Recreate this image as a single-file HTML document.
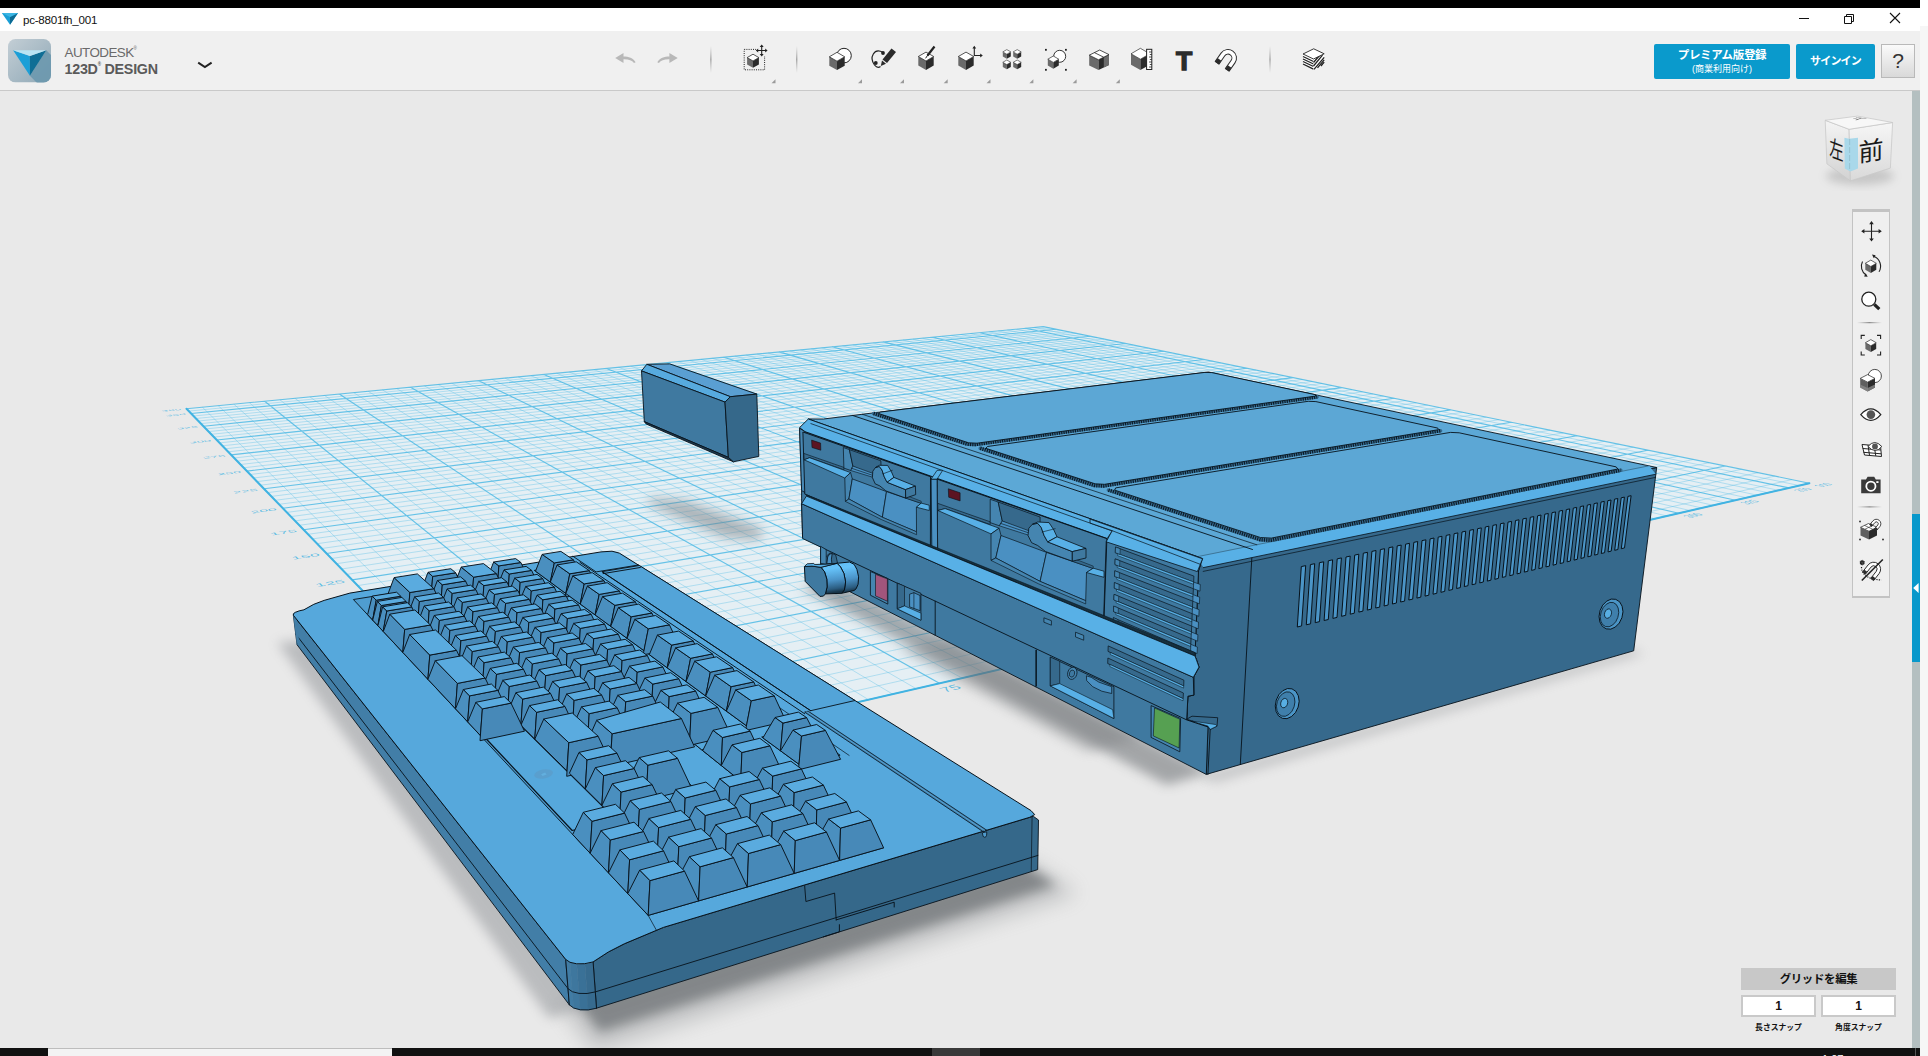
<!DOCTYPE html>
<html lang="ja"><head><meta charset="utf-8"><title>pc-8801fh_001</title>
<style>
html,body{margin:0;padding:0;width:1928px;height:1056px;overflow:hidden;background:#e9e9e9;font-family:"Liberation Sans","Noto Sans CJK JP",sans-serif;}
#app{position:absolute;left:0;top:0;width:1928px;height:1056px;overflow:hidden;background:#e9e9e9;}
.abs{position:absolute}
#blacktop{left:0;top:0;width:1920px;height:8px;background:#000}
#rightwhite{left:1920px;top:0;width:8px;height:1056px;background:linear-gradient(#fff 0,#fff 26px,#f6f6f6 26px)}
#titlebar{left:0;top:8px;width:1920px;height:23px;background:#fff}
#titlebar .t{position:absolute;left:23px;top:5px;font-size:11.6px;color:#111;letter-spacing:-0.25px}
#toolbar{left:0;top:31px;width:1920px;height:59px;background:#f0f0f0;border-bottom:1px solid #c9c9c9}
svg.scene{position:absolute;left:0;top:0}
#strip{left:1912px;top:91px;width:8px;height:957px;background:#b4bfc0}
#stripblue{left:1912px;top:514px;width:8px;height:148px;background:#0898cb}
#taskbar{left:0;top:1048px;width:1920px;height:8px;background:#111}
#search{left:48px;top:1048px;width:344px;height:8px;background:#f3f3f3;border-top:1px solid #bdbdbd;box-sizing:border-box}
#tbact{left:932px;top:1048px;width:48px;height:8px;background:#393939}
.btn{background:#0a9acc;color:#fff;text-align:center;border-radius:2px;font-weight:bold}
#prem{left:1654px;top:44px;width:136px;height:35px}
#prem .a{position:absolute;left:0;width:100%;top:3.5px;font-size:11.5px;line-height:14px;letter-spacing:-0.35px}
#prem .b{position:absolute;left:0;width:100%;top:19px;font-size:9px;line-height:12px;font-weight:normal}
#signin{left:1796px;top:44px;width:79px;height:35px;font-size:11px;line-height:35px;letter-spacing:-0.8px}
#help{left:1881px;top:44px;width:32px;height:32px;border:1px solid #b9b9b9;background:linear-gradient(#fafafa,#d9d9d9);font-size:21px;line-height:32px;text-align:center;color:#333}
#navbar{left:1852px;top:209px;width:37.5px;height:389px;background:#efefef;border:1px solid #c3c3c3;border-top:3px solid #c3c3c3;box-sizing:border-box;border-bottom-width:2px}
#gridhdr{left:1741px;top:968px;width:155px;height:22px;background:#c8c8c8;font-size:11.4px;letter-spacing:-0.3px;font-weight:bold;line-height:23px;text-align:center;color:#111}
.ginp{top:995px;width:75px;height:22px;box-sizing:border-box;border:2px solid #c9c9c9;background:#fff;font-size:12px;line-height:18px;text-align:center;color:#111;font-weight:bold}
.glab{top:1021.5px;width:75px;font-size:7.8px;font-weight:bold;text-align:center;color:#111;line-height:12px;white-space:nowrap}
#brand1{left:64.5px;top:45px;font-size:13.4px;color:#6a6a6a;letter-spacing:-0.55px}
#brand2{left:64.5px;top:60.5px;font-size:14.3px;color:#5a5a5a;font-weight:bold;letter-spacing:-0.25px}
</style></head><body><div id="app">
<svg class="scene" width="1928" height="1056" viewBox="0 0 1928 1056" font-family="Liberation Sans, sans-serif">
<defs><filter id="bl6" x="-30%" y="-30%" width="160%" height="160%"><feGaussianBlur stdDeviation="6"/></filter><filter id="bl10" x="-30%" y="-30%" width="160%" height="160%"><feGaussianBlur stdDeviation="10"/></filter><filter id="bl16" x="-30%" y="-30%" width="160%" height="160%"><feGaussianBlur stdDeviation="16"/></filter></defs>
<polygon points="541.0,775.0 186.5,408.7 1043.3,326.6 1809.4,483.2" fill="#e5eff4"/>
<path d="M571.3 768.0L202.4 407.2M530.6 764.3L1791.9 479.6M601.1 761.2L218.2 405.7M520.6 753.9L1774.8 476.1M630.2 754.5L233.9 404.2M510.8 743.8L1757.9 472.7M658.8 747.9L249.3 402.7M501.3 734.0L1741.4 469.3M714.3 735.1L279.9 399.8M483.2 715.3L1709.1 462.7M741.2 728.9L294.9 398.3M474.5 706.3L1693.4 459.5M767.6 722.9L309.9 396.9M466.1 697.6L1678.0 456.3M793.5 716.9L324.6 395.5M457.9 689.2L1662.8 453.2M844.0 705.3L353.8 392.7M442.2 672.9L1633.2 447.2M868.5 699.7L368.2 391.3M434.7 665.1L1618.8 444.2M892.6 694.1L382.4 389.9M427.3 657.5L1604.6 441.3M916.2 688.7L396.6 388.6M420.2 650.1L1590.6 438.5M962.2 678.1L424.4 385.9M406.4 635.9L1563.3 432.9M984.6 672.9L438.2 384.6M399.8 629.1L1550.0 430.2M1006.7 667.9L451.8 383.3M393.3 622.4L1536.9 427.5M1028.3 662.9L465.3 382.0M387.0 615.9L1524.0 424.9M1070.5 653.2L492.0 379.4M374.9 603.3L1498.8 419.7M1091.0 648.5L505.1 378.2M369.0 597.3L1486.4 417.2M1111.3 643.8L518.2 376.9M363.3 591.3L1474.3 414.7M1131.2 639.2L531.1 375.7M357.7 585.6L1462.3 412.3M1170.0 630.3L556.6 373.2M346.8 574.4L1439.0 407.5M1188.9 625.9L569.2 372.0M341.6 569.0L1427.5 405.1M1207.5 621.7L581.7 370.8M336.5 563.7L1416.3 402.8M1225.9 617.4L594.1 369.6M331.5 558.5L1405.2 400.6M1261.7 609.2L618.6 367.3M321.8 548.5L1383.4 396.1M1279.2 605.2L630.7 366.1M317.1 543.7L1372.8 394.0M1296.4 601.2L642.7 365.0M312.5 538.9L1362.3 391.8M1313.4 597.3L654.5 363.9M308.0 534.3L1352.0 389.7M1346.5 589.7L678.0 361.6M299.3 525.3L1331.7 385.6M1362.7 586.0L689.6 360.5M295.1 520.9L1321.8 383.5M1378.7 582.3L701.1 359.4M290.9 516.6L1312.0 381.5M1394.4 578.7L712.5 358.3M286.9 512.4L1302.3 379.5M1425.2 571.6L735.1 356.1M279.0 504.3L1283.4 375.7M1440.3 568.1L746.2 355.1M275.1 500.3L1274.1 373.8M1455.1 564.7L757.2 354.0M271.4 496.4L1265.0 371.9M1469.8 561.3L768.2 353.0M267.7 492.6L1255.9 370.1M1498.4 554.7L789.9 350.9M260.5 485.2L1238.2 366.4M1512.5 551.5L800.6 349.9M257.0 481.6L1229.5 364.7M1526.3 548.3L811.2 348.8M253.6 478.0L1220.9 362.9M1540.0 545.2L821.7 347.8M250.2 474.5L1212.5 361.2M1566.7 539.0L842.5 345.8M243.7 467.8L1195.8 357.8M1579.8 536.0L852.8 344.9M240.5 464.5L1187.7 356.1M1592.7 533.0L863.0 343.9M237.3 461.2L1179.6 354.5M1605.5 530.1L873.2 342.9M234.2 458.0L1171.6 352.8M1630.5 524.4L893.2 341.0M228.2 451.8L1156.0 349.6M1642.8 521.5L903.1 340.0M225.3 448.8L1148.3 348.1M1654.9 518.7L913.0 339.1M222.4 445.8L1140.7 346.5M1666.9 516.0L922.7 338.2M219.6 442.9L1133.2 345.0M1690.3 510.6L942.0 336.3M214.0 437.1L1118.5 342.0M1701.8 508.0L951.6 335.4M211.3 434.3L1111.3 340.5M1713.2 505.3L961.1 334.5M208.7 431.6L1104.1 339.0M1724.4 502.8L970.5 333.6M206.0 428.9L1097.1 337.6M1746.4 497.7L989.1 331.8M200.9 423.6L1083.2 334.7M1757.2 495.2L998.3 330.9M198.4 421.0L1076.3 333.4M1767.9 492.7L1007.4 330.0M196.0 418.5L1069.6 332.0M1778.5 490.3L1016.5 329.2M193.6 416.0L1062.9 330.6M1799.2 485.5L1034.4 327.5M188.8 411.1L1049.8 327.9" stroke="#4fbbe6" stroke-opacity="0.45" stroke-width="0.8" fill="none"/>
<path d="M541.0 775.0L186.5 408.7M541.0 775.0L1809.4 483.2M686.8 741.5L264.7 401.2M492.1 724.5L1725.1 466.0M819.0 711.0L339.3 394.1M450.0 680.9L1647.9 450.2M939.4 683.3L410.5 387.2M413.2 642.9L1576.8 435.7M1049.6 658.0L478.7 380.7M380.9 609.5L1511.3 422.3M1150.7 634.7L543.9 374.5M352.2 579.9L1450.6 409.9M1243.9 613.3L606.4 368.5M326.6 553.5L1394.2 398.3M1330.1 593.5L666.3 362.7M303.6 529.7L1341.8 387.6M1409.9 575.1L723.8 357.2M282.9 508.3L1292.8 377.6M1484.2 558.0L779.1 351.9M264.1 488.8L1247.0 368.2M1553.4 542.1L832.2 346.8M246.9 471.1L1204.1 359.5M1618.1 527.2L883.2 341.9M231.2 454.9L1163.8 351.2M1678.7 513.3L932.4 337.2M216.8 440.0L1125.8 343.5M1735.5 500.2L979.8 332.7M203.5 426.2L1090.1 336.2M1788.9 487.9L1025.5 328.3M191.2 413.5L1056.3 329.3M1809.4 483.2L1043.3 326.6M186.5 408.7L1043.3 326.6" stroke="#45b6e3" stroke-opacity="0.8" stroke-width="1.15" fill="none"/>
<polyline points="186.5,408.7 541.0,775.0 1809.4,483.2" fill="none" stroke="#41b3e2" stroke-width="2.0" stroke-linejoin="round" stroke-linecap="round"/>
<text transform="matrix(2.151 -0.453 0.665 0.699 485.0 728.7)" font-size="10" text-anchor="end" fill="#4fb8e3" fill-opacity="0.9">25</text>
<text transform="matrix(2.031 -0.393 0.576 0.607 443.1 684.6)" font-size="10" text-anchor="end" fill="#4fb8e3" fill-opacity="0.9">50</text>
<text transform="matrix(1.923 -0.344 0.505 0.531 406.5 646.1)" font-size="10" text-anchor="end" fill="#4fb8e3" fill-opacity="0.9">75</text>
<text transform="matrix(1.825 -0.303 0.445 0.469 374.4 612.4)" font-size="10" text-anchor="end" fill="#4fb8e3" fill-opacity="0.9">100</text>
<text transform="matrix(1.737 -0.270 0.396 0.417 346.0 582.4)" font-size="10" text-anchor="end" fill="#4fb8e3" fill-opacity="0.9">125</text>
<text transform="matrix(1.656 -0.241 0.354 0.373 320.6 555.7)" font-size="10" text-anchor="end" fill="#4fb8e3" fill-opacity="0.9">150</text>
<text transform="matrix(1.583 -0.217 0.319 0.336 297.8 531.8)" font-size="10" text-anchor="end" fill="#4fb8e3" fill-opacity="0.9">175</text>
<text transform="matrix(1.515 -0.197 0.289 0.304 277.3 510.1)" font-size="10" text-anchor="end" fill="#4fb8e3" fill-opacity="0.9">200</text>
<text transform="matrix(1.453 -0.179 0.263 0.276 258.6 490.5)" font-size="10" text-anchor="end" fill="#4fb8e3" fill-opacity="0.9">225</text>
<text transform="matrix(1.396 -0.163 0.240 0.252 241.7 472.6)" font-size="10" text-anchor="end" fill="#4fb8e3" fill-opacity="0.9">250</text>
<text transform="matrix(1.343 -0.150 0.220 0.231 226.1 456.3)" font-size="10" text-anchor="end" fill="#4fb8e3" fill-opacity="0.9">275</text>
<text transform="matrix(1.294 -0.138 0.202 0.213 211.8 441.3)" font-size="10" text-anchor="end" fill="#4fb8e3" fill-opacity="0.9">300</text>
<text transform="matrix(1.248 -0.127 0.187 0.197 198.7 427.4)" font-size="10" text-anchor="end" fill="#4fb8e3" fill-opacity="0.9">325</text>
<text transform="matrix(1.206 -0.118 0.173 0.182 186.5 414.6)" font-size="10" text-anchor="end" fill="#4fb8e3" fill-opacity="0.9">350</text>
<text transform="matrix(1.189 -0.114 0.168 0.177 181.9 409.8)" font-size="10" text-anchor="end" fill="#4fb8e3" fill-opacity="0.9">360</text>
<text transform="matrix(1.912 -0.448 0.845 0.691 688.7 752.4)" font-size="10" text-anchor="start" fill="#4fb8e3" fill-opacity="0.9">25</text>
<text transform="matrix(1.736 -0.406 0.938 0.627 822.9 720.9)" font-size="10" text-anchor="start" fill="#4fb8e3" fill-opacity="0.9">50</text>
<text transform="matrix(1.582 -0.370 1.011 0.572 945.0 692.4)" font-size="10" text-anchor="start" fill="#4fb8e3" fill-opacity="0.9">75</text>
<text transform="matrix(1.448 -0.339 1.069 0.524 1056.5 666.3)" font-size="10" text-anchor="start" fill="#4fb8e3" fill-opacity="0.9">100</text>
<text transform="matrix(1.331 -0.312 1.113 0.481 1158.8 642.3)" font-size="10" text-anchor="start" fill="#4fb8e3" fill-opacity="0.9">125</text>
<text transform="matrix(1.227 -0.287 1.147 0.444 1252.9 620.3)" font-size="10" text-anchor="start" fill="#4fb8e3" fill-opacity="0.9">150</text>
<text transform="matrix(1.135 -0.266 1.173 0.410 1339.8 600.0)" font-size="10" text-anchor="start" fill="#4fb8e3" fill-opacity="0.9">175</text>
<text transform="matrix(1.053 -0.246 1.192 0.381 1420.3 581.1)" font-size="10" text-anchor="start" fill="#4fb8e3" fill-opacity="0.9">200</text>
<text transform="matrix(0.979 -0.229 1.206 0.354 1495.1 563.6)" font-size="10" text-anchor="start" fill="#4fb8e3" fill-opacity="0.9">225</text>
<text transform="matrix(0.913 -0.214 1.214 0.330 1564.7 547.3)" font-size="10" text-anchor="start" fill="#4fb8e3" fill-opacity="0.9">250</text>
<text transform="matrix(0.854 -0.200 1.219 0.309 1629.8 532.1)" font-size="10" text-anchor="start" fill="#4fb8e3" fill-opacity="0.9">275</text>
<text transform="matrix(0.800 -0.187 1.221 0.289 1690.6 517.9)" font-size="10" text-anchor="start" fill="#4fb8e3" fill-opacity="0.9">300</text>
<text transform="matrix(0.751 -0.176 1.221 0.272 1747.6 504.5)" font-size="10" text-anchor="start" fill="#4fb8e3" fill-opacity="0.9">325</text>
<text transform="matrix(0.706 -0.165 1.218 0.255 1801.2 492.0)" font-size="10" text-anchor="start" fill="#4fb8e3" fill-opacity="0.9">350</text>
<text transform="matrix(0.689 -0.161 1.216 0.249 1821.8 487.2)" font-size="10" text-anchor="start" fill="#4fb8e3" fill-opacity="0.9">360</text>
<polygon points="649.8,498.2 685.6,501.1 763.2,529.0 759.2,539.9 723.4,536.9 647.8,504.1" fill="#7d8388" filter="url(#bl6)" opacity="0.55"/>
<polygon points="646.8,364.3 669.7,363.9 756.8,394.1 730.4,396.7" fill="#5a9fd2" stroke="#07121b" stroke-width="0.9" stroke-linejoin="round"/>
<polygon points="641.5,370.9 646.8,364.3 730.4,396.7 725.0,402.1" fill="#57aade" stroke="#07121b" stroke-width="0.9" stroke-linejoin="round"/>
<polygon points="641.5,370.9 725.0,402.1 728.4,457.4 644.3,421.6" fill="#3f79a0" stroke="#07121b" stroke-width="0.9" stroke-linejoin="round"/>
<polygon points="644.3,421.6 728.4,457.4 733.4,461.8 646.2,424.0" fill="#1d3a50" stroke="#07121b" stroke-width="0.9" stroke-linejoin="round"/>
<polygon points="725.0,402.1 730.4,396.7 756.8,394.1 758.8,456.4 733.4,461.8 728.4,457.4" fill="#35688a" stroke="#07121b" stroke-width="0.9" stroke-linejoin="round"/>
<polygon points="1166.8,785.1 1210.3,772.3 836.9,580.8 800.8,587.4" fill="#5d6266" filter="url(#bl6)" opacity="0.5"/>
<polygon points="1087.8,752.2 1142.3,737.4 949.2,638.4 899.5,649.0" fill="#6d7175" filter="url(#bl6)" opacity="0.3"/>
<polygon points="1214.8,782.4 1644.2,653.4 1629.1,648.6 1200.8,775.1" fill="#6d7175" filter="url(#bl6)" opacity="0.3"/>
<polygon points="1202.6,558.5 1198.5,570.8 1195.0,656.0 1199.0,667.1 1193.8,676.8 1193.8,695.1 1187.9,696.2 1186.7,719.9 1208.0,727.0 1206.3,774.4 1633.7,650.8 1656.7,467.5" fill="#36698c" stroke="#07121b" stroke-width="0.9" stroke-linejoin="round"/>
<polyline points="1252.3,549.5 1240.3,764.6" fill="none" stroke="#07121b" stroke-width="0.9" stroke-linejoin="round" stroke-linecap="round"/>
<polygon points="808.3,419.0 1202.6,558.5 1656.7,467.5 1208.5,372.0 823.5,419.0" fill="#5ca8d6" stroke="#07121b" stroke-width="0.9" stroke-linejoin="round"/>
<polygon points="1203.4,567.6 1655.9,474.2 1649.1,465.8 1196.7,556.8" fill="#58b0e6"/>
<polyline points="1203.4,567.6 1655.9,474.2" fill="none" stroke="#07121b" stroke-width="0.8" stroke-linejoin="round" stroke-linecap="round"/>
<polyline points="1203.2,571.4 1655.5,477.4" fill="none" stroke="#07121b" stroke-width="0.7" stroke-linejoin="round" stroke-linecap="round"/>
<polyline points="1195.2,557.1 1649.1,465.8" fill="none" stroke="#2a5068" stroke-width="0.6" stroke-linejoin="round" stroke-linecap="round"/>
<polyline points="1252.5,549.5 852.8,415.5" fill="none" stroke="#07121b" stroke-width="0.9" stroke-linejoin="round" stroke-linecap="round"/>
<polyline points="1256.8,544.8 862.4,414.3" fill="none" stroke="#07121b" stroke-width="0.7" stroke-linejoin="round" stroke-linecap="round"/>
<polyline points="873.7,413.5 967.6,444.2 975.5,444.5 1317.1,396.9" fill="none" stroke="#356a8e" stroke-width="3.6" stroke-linejoin="round" stroke-linecap="round"/>
<polyline points="873.7,413.5 967.6,444.2 975.5,444.5 1317.1,396.9" fill="none" stroke="#0b1a26" stroke-width="3.6" stroke-linejoin="round" stroke-dasharray="1.1 1.2" stroke-linecap="butt"/>
<polygon points="977.0,443.2 1315.5,396.1 1315.5,394.7 1211.8,372.6 1204.9,372.4 880.6,412.0 878.6,413.5 968.7,442.8" fill="#5ca7d5" stroke="#07121b" stroke-width="0.9" stroke-linejoin="round"/>
<polyline points="980.3,448.3 1094.5,485.5 1103.4,486.0 1440.5,430.7" fill="none" stroke="#356a8e" stroke-width="3.6" stroke-linejoin="round" stroke-linecap="round"/>
<polyline points="980.3,448.3 1094.5,485.5 1103.4,486.0 1440.5,430.7" fill="none" stroke="#0b1a26" stroke-width="3.6" stroke-linejoin="round" stroke-dasharray="1.1 1.2" stroke-linecap="butt"/>
<polygon points="1104.6,484.3 1438.4,429.7 1437.8,428.1 1315.9,401.6 1308.3,401.3 987.4,446.5 985.8,448.3 1095.1,483.8" fill="#5ca7d5" stroke="#07121b" stroke-width="0.9" stroke-linejoin="round"/>
<polyline points="1108.5,490.1 1260.4,539.7 1270.8,540.3 1620.7,470.2" fill="none" stroke="#356a8e" stroke-width="3.6" stroke-linejoin="round" stroke-linecap="round"/>
<polyline points="1108.5,490.1 1260.4,539.7 1270.8,540.3 1620.7,470.2" fill="none" stroke="#0b1a26" stroke-width="3.6" stroke-linejoin="round" stroke-dasharray="1.1 1.2" stroke-linecap="butt"/>
<polygon points="1271.3,538.1 1617.8,469.0 1616.2,466.9 1459.2,432.8 1450.6,432.4 1115.7,487.9 1114.6,490.1 1260.4,537.5" fill="#5ca7d5" stroke="#07121b" stroke-width="0.9" stroke-linejoin="round"/>
<polygon points="1297.3,627.0 1301.6,625.9 1305.7,565.6 1301.3,566.6" fill="#4b95c7" stroke="#07121b" stroke-width="1.0" stroke-linejoin="round"/>
<polygon points="1306.3,624.8 1310.6,623.8 1314.7,563.7 1310.4,564.6" fill="#4b95c7" stroke="#07121b" stroke-width="1.0" stroke-linejoin="round"/>
<polygon points="1315.2,622.7 1319.5,621.6 1323.7,561.8 1319.4,562.7" fill="#4b95c7" stroke="#07121b" stroke-width="1.0" stroke-linejoin="round"/>
<polygon points="1324.1,620.5 1328.3,619.5 1332.6,559.8 1328.3,560.8" fill="#4b95c7" stroke="#07121b" stroke-width="1.0" stroke-linejoin="round"/>
<polygon points="1332.9,618.4 1337.0,617.4 1341.4,557.9 1337.2,558.9" fill="#4b95c7" stroke="#07121b" stroke-width="1.0" stroke-linejoin="round"/>
<polygon points="1341.6,616.3 1345.7,615.3 1350.2,556.1 1346.0,557.0" fill="#4b95c7" stroke="#07121b" stroke-width="1.0" stroke-linejoin="round"/>
<polygon points="1350.2,614.2 1354.3,613.2 1358.8,554.2 1354.7,555.1" fill="#4b95c7" stroke="#07121b" stroke-width="1.0" stroke-linejoin="round"/>
<polygon points="1358.8,612.1 1362.9,611.1 1367.5,552.3 1363.3,553.2" fill="#4b95c7" stroke="#07121b" stroke-width="1.0" stroke-linejoin="round"/>
<polygon points="1367.3,610.1 1371.3,609.1 1376.0,550.5 1371.9,551.4" fill="#4b95c7" stroke="#07121b" stroke-width="1.0" stroke-linejoin="round"/>
<polygon points="1375.7,608.0 1379.7,607.1 1384.5,548.7 1380.4,549.6" fill="#4b95c7" stroke="#07121b" stroke-width="1.0" stroke-linejoin="round"/>
<polygon points="1384.1,606.0 1388.1,605.0 1392.9,546.9 1388.9,547.7" fill="#4b95c7" stroke="#07121b" stroke-width="1.0" stroke-linejoin="round"/>
<polygon points="1392.4,604.0 1396.4,603.0 1401.2,545.1 1397.2,545.9" fill="#4b95c7" stroke="#07121b" stroke-width="1.0" stroke-linejoin="round"/>
<polygon points="1400.6,602.0 1404.6,601.1 1409.5,543.3 1405.6,544.2" fill="#4b95c7" stroke="#07121b" stroke-width="1.0" stroke-linejoin="round"/>
<polygon points="1408.8,600.0 1412.7,599.1 1417.7,541.5 1413.8,542.4" fill="#4b95c7" stroke="#07121b" stroke-width="1.0" stroke-linejoin="round"/>
<polygon points="1416.9,598.1 1420.8,597.1 1425.9,539.8 1422.0,540.6" fill="#4b95c7" stroke="#07121b" stroke-width="1.0" stroke-linejoin="round"/>
<polygon points="1425.0,596.1 1428.8,595.2 1434.0,538.0 1430.1,538.9" fill="#4b95c7" stroke="#07121b" stroke-width="1.0" stroke-linejoin="round"/>
<polygon points="1433.0,594.2 1436.8,593.3 1442.0,536.3 1438.2,537.1" fill="#4b95c7" stroke="#07121b" stroke-width="1.0" stroke-linejoin="round"/>
<polygon points="1440.9,592.3 1444.7,591.4 1450.0,534.6 1446.2,535.4" fill="#4b95c7" stroke="#07121b" stroke-width="1.0" stroke-linejoin="round"/>
<polygon points="1448.8,590.4 1452.5,589.5 1457.9,532.9 1454.1,533.7" fill="#4b95c7" stroke="#07121b" stroke-width="1.0" stroke-linejoin="round"/>
<polygon points="1456.6,588.5 1460.3,587.6 1465.7,531.2 1462.0,532.0" fill="#4b95c7" stroke="#07121b" stroke-width="1.0" stroke-linejoin="round"/>
<polygon points="1464.3,586.6 1468.0,585.7 1473.5,529.5 1469.8,530.3" fill="#4b95c7" stroke="#07121b" stroke-width="1.0" stroke-linejoin="round"/>
<polygon points="1472.0,584.7 1475.7,583.9 1481.3,527.9 1477.6,528.7" fill="#4b95c7" stroke="#07121b" stroke-width="1.0" stroke-linejoin="round"/>
<polygon points="1479.7,582.9 1483.3,582.0 1488.9,526.2 1485.3,527.0" fill="#4b95c7" stroke="#07121b" stroke-width="1.0" stroke-linejoin="round"/>
<polygon points="1487.3,581.1 1490.9,580.2 1496.5,524.6 1492.9,525.4" fill="#4b95c7" stroke="#07121b" stroke-width="1.0" stroke-linejoin="round"/>
<polygon points="1494.8,579.3 1498.4,578.4 1504.1,523.0 1500.5,523.7" fill="#4b95c7" stroke="#07121b" stroke-width="1.0" stroke-linejoin="round"/>
<polygon points="1502.3,577.4 1505.8,576.6 1511.6,521.4 1508.0,522.1" fill="#4b95c7" stroke="#07121b" stroke-width="1.0" stroke-linejoin="round"/>
<polygon points="1509.7,575.7 1513.2,574.8 1519.0,519.8 1515.5,520.5" fill="#4b95c7" stroke="#07121b" stroke-width="1.0" stroke-linejoin="round"/>
<polygon points="1517.0,573.9 1520.5,573.0 1526.4,518.2 1522.9,518.9" fill="#4b95c7" stroke="#07121b" stroke-width="1.0" stroke-linejoin="round"/>
<polygon points="1524.3,572.1 1527.8,571.3 1533.8,516.6 1530.3,517.3" fill="#4b95c7" stroke="#07121b" stroke-width="1.0" stroke-linejoin="round"/>
<polygon points="1531.6,570.4 1535.1,569.5 1541.0,515.0 1537.6,515.8" fill="#4b95c7" stroke="#07121b" stroke-width="1.0" stroke-linejoin="round"/>
<polygon points="1538.8,568.6 1542.2,567.8 1548.3,513.5 1544.8,514.2" fill="#4b95c7" stroke="#07121b" stroke-width="1.0" stroke-linejoin="round"/>
<polygon points="1545.9,566.9 1549.4,566.1 1555.5,511.9 1552.0,512.7" fill="#4b95c7" stroke="#07121b" stroke-width="1.0" stroke-linejoin="round"/>
<polygon points="1553.0,565.2 1556.4,564.3 1562.6,510.4 1559.2,511.1" fill="#4b95c7" stroke="#07121b" stroke-width="1.0" stroke-linejoin="round"/>
<polygon points="1560.1,563.5 1563.5,562.7 1569.7,508.9 1566.3,509.6" fill="#4b95c7" stroke="#07121b" stroke-width="1.0" stroke-linejoin="round"/>
<polygon points="1567.1,561.8 1570.4,561.0 1576.7,507.4 1573.3,508.1" fill="#4b95c7" stroke="#07121b" stroke-width="1.0" stroke-linejoin="round"/>
<polygon points="1574.0,560.1 1577.3,559.3 1583.6,505.9 1580.3,506.6" fill="#4b95c7" stroke="#07121b" stroke-width="1.0" stroke-linejoin="round"/>
<polygon points="1580.9,558.4 1584.2,557.6 1590.6,504.4 1587.3,505.1" fill="#4b95c7" stroke="#07121b" stroke-width="1.0" stroke-linejoin="round"/>
<polygon points="1587.8,556.8 1591.1,556.0 1597.4,502.9 1594.1,503.6" fill="#4b95c7" stroke="#07121b" stroke-width="1.0" stroke-linejoin="round"/>
<polygon points="1594.6,555.1 1597.8,554.3 1604.3,501.4 1601.0,502.1" fill="#4b95c7" stroke="#07121b" stroke-width="1.0" stroke-linejoin="round"/>
<polygon points="1601.3,553.5 1604.6,552.7 1611.0,500.0 1607.8,500.7" fill="#4b95c7" stroke="#07121b" stroke-width="1.0" stroke-linejoin="round"/>
<polygon points="1608.0,551.9 1611.2,551.1 1617.8,498.5 1614.5,499.2" fill="#4b95c7" stroke="#07121b" stroke-width="1.0" stroke-linejoin="round"/>
<polygon points="1614.7,550.3 1617.9,549.5 1624.4,497.1 1621.2,497.8" fill="#4b95c7" stroke="#07121b" stroke-width="1.0" stroke-linejoin="round"/>
<polygon points="1621.3,548.7 1624.5,547.9 1631.1,495.7 1627.9,496.4" fill="#4b95c7" stroke="#07121b" stroke-width="1.0" stroke-linejoin="round"/>
<ellipse cx="1287.2" cy="703.6" rx="11.5" ry="15.5" transform="rotate(18 1287.2 703.6)" fill="#4b95c6" stroke="#07121b" stroke-width="0.9"/>
<ellipse cx="1285.7" cy="704.1" rx="8.8" ry="12.6" transform="rotate(18 1285.7 704.1)" fill="#3f7fab" stroke="#07121b" stroke-width="0.7"/>
<ellipse cx="1284.2" cy="703.1" rx="3.4" ry="4.8" transform="rotate(18 1284.2 703.1)" fill="#58aee2" stroke="#07121b" stroke-width="0.7"/>
<ellipse cx="1611.0" cy="614.1" rx="11.5" ry="15.5" transform="rotate(18 1611.0 614.1)" fill="#4b95c6" stroke="#07121b" stroke-width="0.9"/>
<ellipse cx="1609.5" cy="614.6" rx="8.8" ry="12.6" transform="rotate(18 1609.5 614.6)" fill="#3f7fab" stroke="#07121b" stroke-width="0.7"/>
<ellipse cx="1608.0" cy="613.6" rx="3.4" ry="4.8" transform="rotate(18 1608.0 613.6)" fill="#58aee2" stroke="#07121b" stroke-width="0.7"/>
<polygon points="804.9,431.6 1198.5,570.8 1195.0,656.0 1199.0,667.1 1193.8,676.8 1193.8,695.1 1187.9,696.2 1186.7,719.9 1208.0,727.0 1206.3,774.4 935.2,635.3 849.9,591.7 820.6,574.7 820.6,546.3 802.6,536.8 801.6,498.9 801.6,490.6 799.6,428.3" fill="#3f79a0" stroke="#07121b" stroke-width="0.9" stroke-linejoin="round"/>
<polygon points="799.6,427.6 808.3,419.0 1202.6,558.5 1198.5,570.8 804.9,431.6" fill="#58b0e6" stroke="#07121b" stroke-width="0.9" stroke-linejoin="round"/>
<polyline points="810.9,423.6 1199.5,562.1" fill="none" stroke="#07121b" stroke-width="0.7" stroke-linejoin="round" stroke-linecap="round"/>
<polygon points="799.6,428.3 804.9,431.6 806.3,493.2 801.6,490.6" fill="#4787b3" stroke="#07121b" stroke-width="0.8" stroke-linejoin="round"/>
<polygon points="937.1,479.1 1106.9,538.7 1104.0,619.2 937.6,549.2" fill="#3f79a0" stroke="#07121b" stroke-width="0.9" stroke-linejoin="round"/>
<polygon points="948.3,488.8 960.1,492.8 960.1,500.9 948.7,497.2" fill="#5c1422" stroke="#07121b" stroke-width="0.6" stroke-linejoin="round"/>
<polygon points="937.6,503.3 990.2,521.8 990.2,524.5 945.1,508.6 937.9,510.5" fill="#36698c" stroke="#07121b" stroke-width="0.6" stroke-linejoin="round"/>
<polygon points="990.2,499.3 998.2,502.0 1002.3,521.0 999.4,525.8 990.2,522.6" fill="#4585b0" stroke="#07121b" stroke-width="0.7" stroke-linejoin="round"/>
<polygon points="998.2,502.0 1040.1,517.0 1040.1,530.7 1029.6,533.9 1002.3,521.0" fill="#36698c" stroke="#07121b" stroke-width="0.7" stroke-linejoin="round"/>
<polygon points="1002.3,521.0 1029.6,531.0 1029.6,535.5 999.4,525.8" fill="#4a90c2" stroke="#07121b" stroke-width="0.6" stroke-linejoin="round"/>
<polyline points="1000.7,523.4 1029.6,533.2" fill="none" stroke="#07121b" stroke-width="0.6" stroke-linejoin="round" stroke-linecap="round"/>
<polygon points="937.9,510.5 945.1,508.6 999.1,528.2 991.0,533.9" fill="#58b0e6" stroke="#07121b" stroke-width="0.7" stroke-linejoin="round"/>
<polygon points="991.0,533.9 999.1,528.2 1001.0,535.5 995.8,558.0 991.0,560.4" fill="#4585b0" stroke="#07121b" stroke-width="0.7" stroke-linejoin="round"/>
<polygon points="1001.0,535.5 1046.5,552.4 1040.1,581.4 995.8,558.0" fill="#4a90c2" stroke="#07121b" stroke-width="0.7" stroke-linejoin="round"/>
<polygon points="1046.5,552.4 1093.2,568.5 1086.5,572.5 1085.7,600.7 1040.1,581.4" fill="#4a90c2" stroke="#07121b" stroke-width="0.7" stroke-linejoin="round"/>
<polygon points="991.0,560.4 995.8,558.0 1040.1,581.4 1085.7,600.7 1085.7,603.9 1038.5,583.8" fill="#4585b0" stroke="#07121b" stroke-width="0.6" stroke-linejoin="round"/>
<polygon points="1093.2,568.2 1104.0,571.2 1104.0,577.3 1086.5,572.5" fill="#58b0e6" stroke="#07121b" stroke-width="0.7" stroke-linejoin="round"/>
<polygon points="1072.3,558.0 1093.2,566.1 1093.2,568.5 1072.3,561.2" fill="#36698c" stroke="#07121b" stroke-width="0.5" stroke-linejoin="round"/>
<polygon points="1028.0,535.5 1028.8,528.2 1032.5,524.2 1037.7,523.3 1041.2,527.4 1044.1,535.5 1047.7,541.9 1072.3,551.6 1072.3,561.2 1045.7,551.6 1037.7,545.5 1031.6,542.7" fill="#4585b0" stroke="#07121b" stroke-width="0.8" stroke-linejoin="round"/>
<polygon points="1032.5,524.2 1037.7,522.0 1049.0,522.6 1053.8,529.9 1057.0,536.8 1047.7,541.9 1044.1,535.5 1041.2,527.4 1037.7,523.3" fill="#58b0e6" stroke="#07121b" stroke-width="0.8" stroke-linejoin="round"/>
<polyline points="1042.2,532.0 1055.1,528.7" fill="none" stroke="#07121b" stroke-width="0.6" stroke-linejoin="round" stroke-linecap="round"/>
<polygon points="1047.7,541.9 1057.0,536.8 1086.0,548.4 1072.3,551.6" fill="#58b0e6" stroke="#07121b" stroke-width="0.8" stroke-linejoin="round"/>
<polygon points="1072.3,551.6 1086.0,548.4 1086.0,558.0 1072.3,561.2" fill="#3f79a0" stroke="#07121b" stroke-width="0.8" stroke-linejoin="round"/>
<polygon points="802.9,432.0 930.5,476.7 930.4,547.0 804.8,494.1" fill="#3f79a0" stroke="#07121b" stroke-width="0.9" stroke-linejoin="round"/>
<polygon points="811.6,440.1 820.6,443.1 820.8,450.2 812.0,447.5" fill="#5c1422" stroke="#07121b" stroke-width="0.6" stroke-linejoin="round"/>
<polygon points="803.8,453.4 843.9,467.4 843.9,469.8 809.6,457.7 804.2,459.8" fill="#36698c" stroke="#07121b" stroke-width="0.6" stroke-linejoin="round"/>
<polygon points="843.3,447.5 849.4,449.6 852.9,466.1 850.8,470.5 843.9,468.1" fill="#4585b0" stroke="#07121b" stroke-width="0.7" stroke-linejoin="round"/>
<polygon points="849.4,449.6 880.9,460.8 881.2,472.8 873.6,476.1 852.9,466.1" fill="#36698c" stroke="#07121b" stroke-width="0.7" stroke-linejoin="round"/>
<polygon points="852.9,466.1 873.5,473.6 873.6,477.5 850.8,470.5" fill="#4a90c2" stroke="#07121b" stroke-width="0.6" stroke-linejoin="round"/>
<polyline points="851.7,468.3 873.5,475.6" fill="none" stroke="#07121b" stroke-width="0.6" stroke-linejoin="round" stroke-linecap="round"/>
<polygon points="804.2,459.8 809.6,457.7 850.6,472.6 844.8,478.0" fill="#58b0e6" stroke="#07121b" stroke-width="0.7" stroke-linejoin="round"/>
<polygon points="844.8,478.0 850.6,472.6 852.3,478.9 848.9,499.0 845.4,501.4" fill="#4585b0" stroke="#07121b" stroke-width="0.7" stroke-linejoin="round"/>
<polygon points="852.3,478.9 886.5,491.6 882.4,517.3 848.9,499.0" fill="#4a90c2" stroke="#07121b" stroke-width="0.7" stroke-linejoin="round"/>
<polygon points="886.5,491.6 921.2,503.3 916.4,507.2 916.5,531.8 882.4,517.3" fill="#4a90c2" stroke="#07121b" stroke-width="0.7" stroke-linejoin="round"/>
<polygon points="845.4,501.4 848.9,499.0 882.4,517.3 916.5,531.8 916.6,534.7 881.3,519.5" fill="#4585b0" stroke="#07121b" stroke-width="0.6" stroke-linejoin="round"/>
<polygon points="921.2,503.1 929.2,505.2 929.3,510.5 916.4,507.2" fill="#58b0e6" stroke="#07121b" stroke-width="0.7" stroke-linejoin="round"/>
<polygon points="905.6,495.2 921.2,501.2 921.2,503.3 905.7,498.1" fill="#36698c" stroke="#07121b" stroke-width="0.5" stroke-linejoin="round"/>
<polygon points="872.4,477.6 872.8,471.2 875.5,467.5 879.3,466.4 882.0,470.0 884.3,476.9 887.1,482.3 905.5,489.6 905.7,498.1 885.9,490.9 879.8,485.9 875.2,483.8" fill="#4585b0" stroke="#07121b" stroke-width="0.8" stroke-linejoin="round"/>
<polygon points="875.5,467.5 879.2,465.3 887.6,465.4 891.3,471.5 893.9,477.4 887.1,482.3 884.3,476.9 882.0,470.0 879.3,466.4" fill="#58b0e6" stroke="#07121b" stroke-width="0.8" stroke-linejoin="round"/>
<polyline points="882.8,473.9 892.2,470.4" fill="none" stroke="#07121b" stroke-width="0.6" stroke-linejoin="round" stroke-linecap="round"/>
<polygon points="887.1,482.3 893.9,477.4 915.4,486.1 905.5,489.6" fill="#58b0e6" stroke="#07121b" stroke-width="0.8" stroke-linejoin="round"/>
<polygon points="905.5,489.6 915.4,486.1 915.7,494.6 905.7,498.1" fill="#3f79a0" stroke="#07121b" stroke-width="0.8" stroke-linejoin="round"/>
<polygon points="931.1,479.1 937.1,479.1 937.6,550.0 931.8,547.6" fill="#4a90c2" stroke="#07121b" stroke-width="0.8" stroke-linejoin="round"/>
<polygon points="931.1,479.1 937.1,470.3 942.7,470.3 937.1,479.1" fill="#58b0e6" stroke="#07121b" stroke-width="0.7" stroke-linejoin="round"/>
<polygon points="1106.9,538.7 1112.5,530.7 1116.6,532.0 1110.1,540.3" fill="#58b0e6" stroke="#07121b" stroke-width="0.7" stroke-linejoin="round"/>
<polygon points="1090.0,519.1 1202.5,558.8 1197.4,571.6 1106.2,541.8 1112.2,530.7 1090.0,523.0" fill="#58b0e6" stroke="#07121b" stroke-width="0.8" stroke-linejoin="round"/>
<polyline points="1112.2,530.7 1200.5,564.4" fill="none" stroke="#07121b" stroke-width="0.7" stroke-linejoin="round" stroke-linecap="round"/>
<polyline points="1106.2,541.8 1103.6,619.3" fill="none" stroke="#07121b" stroke-width="0.8" stroke-linejoin="round" stroke-linecap="round"/>
<polygon points="1115.5,547.0 1193.9,576.1 1193.7,582.1 1115.3,552.7" fill="#36698c" stroke="#07121b" stroke-width="0.7" stroke-linejoin="round"/>
<polygon points="1117.7,553.6 1193.7,582.1 1193.6,584.3 1117.6,555.6" fill="#58b0e6" stroke="#07121b" stroke-width="0.5" stroke-linejoin="round"/>
<polygon points="1193.7,582.1 1200.3,584.5 1200.0,591.2 1193.4,588.7" fill="#4a90c2" stroke="#07121b" stroke-width="0.6" stroke-linejoin="round"/>
<polygon points="1115.5,547.0 1120.2,548.7 1120.0,554.4 1115.3,552.7" fill="#4585b0" stroke="#07121b" stroke-width="0.5" stroke-linejoin="round"/>
<polygon points="1115.2,558.9 1193.4,588.7 1193.1,594.6 1115.0,564.6" fill="#36698c" stroke="#07121b" stroke-width="0.7" stroke-linejoin="round"/>
<polygon points="1117.3,565.5 1193.1,594.6 1193.0,596.8 1117.2,567.5" fill="#58b0e6" stroke="#07121b" stroke-width="0.5" stroke-linejoin="round"/>
<polygon points="1193.1,594.6 1199.7,597.2 1199.4,603.8 1192.8,601.2" fill="#4a90c2" stroke="#07121b" stroke-width="0.6" stroke-linejoin="round"/>
<polygon points="1115.2,558.9 1119.8,560.7 1119.6,566.4 1115.0,564.6" fill="#4585b0" stroke="#07121b" stroke-width="0.5" stroke-linejoin="round"/>
<polygon points="1114.8,570.8 1192.8,601.2 1192.5,607.1 1114.6,576.4" fill="#36698c" stroke="#07121b" stroke-width="0.7" stroke-linejoin="round"/>
<polygon points="1116.9,577.3 1192.5,607.1 1192.4,609.3 1116.9,579.4" fill="#58b0e6" stroke="#07121b" stroke-width="0.5" stroke-linejoin="round"/>
<polygon points="1192.5,607.1 1199.1,609.7 1198.8,616.3 1192.2,613.7" fill="#4a90c2" stroke="#07121b" stroke-width="0.6" stroke-linejoin="round"/>
<polygon points="1114.8,570.8 1119.4,572.6 1119.3,578.2 1114.6,576.4" fill="#4585b0" stroke="#07121b" stroke-width="0.5" stroke-linejoin="round"/>
<polygon points="1114.4,582.6 1192.2,613.7 1192.0,619.6 1114.3,588.2" fill="#36698c" stroke="#07121b" stroke-width="0.7" stroke-linejoin="round"/>
<polygon points="1116.6,589.1 1192.0,619.6 1191.9,621.8 1116.5,591.2" fill="#58b0e6" stroke="#07121b" stroke-width="0.5" stroke-linejoin="round"/>
<polygon points="1192.0,619.6 1198.5,622.2 1198.2,628.8 1191.7,626.1" fill="#4a90c2" stroke="#07121b" stroke-width="0.6" stroke-linejoin="round"/>
<polygon points="1114.4,582.6 1119.1,584.5 1118.9,590.1 1114.3,588.2" fill="#4585b0" stroke="#07121b" stroke-width="0.5" stroke-linejoin="round"/>
<polygon points="1114.1,594.4 1191.7,626.1 1191.4,632.0 1113.9,599.9" fill="#36698c" stroke="#07121b" stroke-width="0.7" stroke-linejoin="round"/>
<polygon points="1116.2,600.9 1191.4,632.0 1191.3,634.2 1116.1,602.9" fill="#58b0e6" stroke="#07121b" stroke-width="0.5" stroke-linejoin="round"/>
<polygon points="1191.4,632.0 1197.9,634.7 1197.6,641.2 1191.1,638.5" fill="#4a90c2" stroke="#07121b" stroke-width="0.6" stroke-linejoin="round"/>
<polygon points="1114.1,594.4 1118.7,596.3 1118.5,601.9 1113.9,599.9" fill="#4585b0" stroke="#07121b" stroke-width="0.5" stroke-linejoin="round"/>
<polygon points="1113.7,606.1 1191.1,638.5 1190.8,644.3 1113.6,611.6" fill="#36698c" stroke="#07121b" stroke-width="0.7" stroke-linejoin="round"/>
<polygon points="1115.9,612.6 1190.8,644.3 1190.7,646.5 1115.8,614.6" fill="#58b0e6" stroke="#07121b" stroke-width="0.5" stroke-linejoin="round"/>
<polygon points="1190.8,644.3 1197.4,647.1 1197.1,653.6 1190.6,650.8" fill="#4a90c2" stroke="#07121b" stroke-width="0.6" stroke-linejoin="round"/>
<polygon points="1113.7,606.1 1118.3,608.0 1118.2,613.6 1113.6,611.6" fill="#4585b0" stroke="#07121b" stroke-width="0.5" stroke-linejoin="round"/>
<polygon points="1113.4,617.7 1190.6,650.8 1190.3,656.6 1113.2,623.3" fill="#36698c" stroke="#07121b" stroke-width="0.7" stroke-linejoin="round"/>
<polygon points="1115.5,624.3 1190.3,656.6 1190.2,658.8 1115.4,626.3" fill="#58b0e6" stroke="#07121b" stroke-width="0.5" stroke-linejoin="round"/>
<polygon points="1190.3,656.6 1196.8,659.4 1196.5,665.9 1190.0,663.0" fill="#4a90c2" stroke="#07121b" stroke-width="0.6" stroke-linejoin="round"/>
<polygon points="1113.4,617.7 1118.0,619.7 1117.8,625.3 1113.2,623.3" fill="#4585b0" stroke="#07121b" stroke-width="0.5" stroke-linejoin="round"/>
<polygon points="801.6,503.7 1193.3,677.3 1193.8,695.1 1187.9,696.2 1186.7,719.9 802.6,538.5" fill="#3f79a0" stroke="#07121b" stroke-width="0.9" stroke-linejoin="round"/>
<polygon points="806.7,494.8 1195.0,652.5 1195.0,656.0 806.4,496.1" fill="#16303f" stroke="#07121b" stroke-width="0.5" stroke-linejoin="round"/>
<polygon points="806.4,496.1 1195.0,656.0 1199.0,667.1 1193.3,677.3 801.6,503.7" fill="#58b0e6" stroke="#07121b" stroke-width="0.8" stroke-linejoin="round"/>
<polygon points="1108.2,645.9 1183.9,680.2 1183.7,686.0 1108.0,651.4" fill="#36698c" stroke="#07121b" stroke-width="0.7" stroke-linejoin="round"/>
<polygon points="1110.3,652.4 1183.7,686.0 1183.6,688.1 1110.3,654.5" fill="#58b0e6" stroke="#07121b" stroke-width="0.5" stroke-linejoin="round"/>
<polygon points="1107.9,658.0 1183.4,693.0 1183.1,698.7 1107.7,663.5" fill="#36698c" stroke="#07121b" stroke-width="0.7" stroke-linejoin="round"/>
<polygon points="1110.0,664.5 1183.1,698.7 1183.0,700.8 1109.9,666.5" fill="#58b0e6" stroke="#07121b" stroke-width="0.5" stroke-linejoin="round"/>
<polygon points="1043.9,617.8 1051.4,620.7 1051.4,625.2 1043.9,622.2" fill="#4585b0" stroke="#07121b" stroke-width="0.7" stroke-linejoin="round"/>
<polygon points="1075.5,632.2 1083.7,635.4 1083.7,640.2 1075.5,636.9" fill="#4585b0" stroke="#07121b" stroke-width="0.7" stroke-linejoin="round"/>
<polygon points="820.6,546.3 826.2,549.7 826.2,564.3 820.6,563.3" fill="#4585b0" stroke="#07121b" stroke-width="0.7" stroke-linejoin="round"/>
<polygon points="826.8,555.8 830.0,552.9 835.7,554.8 837.6,563.3 829.1,564.3" fill="#36698c" stroke="#07121b" stroke-width="0.7" stroke-linejoin="round"/>
<polygon points="870.4,571.5 887.8,578.5 887.8,604.1 870.4,595.2" fill="#4585b0" stroke="#07121b" stroke-width="0.8" stroke-linejoin="round"/>
<polygon points="875.5,574.3 887.4,578.9 887.4,601.2 875.5,595.9" fill="#a2557c" stroke="#07121b" stroke-width="0.6" stroke-linejoin="round"/>
<polygon points="897.3,583.2 920.9,593.3 920.9,620.2 897.3,608.8" fill="#3f79a0" stroke="#07121b" stroke-width="0.8" stroke-linejoin="round"/>
<polygon points="897.3,583.2 904.5,586.1 904.5,605.9 897.3,608.8" fill="#36698c" stroke="#07121b" stroke-width="0.6" stroke-linejoin="round"/>
<polygon points="897.3,608.8 904.5,605.9 920.9,613.1 920.9,620.2" fill="#58b0e6" stroke="#07121b" stroke-width="0.6" stroke-linejoin="round"/>
<polygon points="909.6,594.2 913.9,592.7 920.0,595.5 920.0,610.7 913.9,608.4 909.6,606.9" fill="#4a90c2" stroke="#07121b" stroke-width="0.7" stroke-linejoin="round"/>
<polyline points="913.9,592.7 913.9,608.4" fill="none" stroke="#07121b" stroke-width="0.6" stroke-linejoin="round" stroke-linecap="round"/>
<polyline points="935.2,601.2 935.2,635.3" fill="none" stroke="#07121b" stroke-width="0.9" stroke-linejoin="round" stroke-linecap="round"/>
<polyline points="1036.4,650.1 1036.4,685.7" fill="none" stroke="#07121b" stroke-width="0.9" stroke-linejoin="round" stroke-linecap="round"/>
<polyline points="1035.9,650.3 1035.9,686.7" fill="none" stroke="#07121b" stroke-width="0.9" stroke-linejoin="round" stroke-linecap="round"/>
<polygon points="1050.3,657.1 1113.9,686.7 1113.9,718.5 1050.3,685.9" fill="#3f79a0" stroke="#07121b" stroke-width="0.8" stroke-linejoin="round"/>
<polygon points="1050.3,657.1 1059.7,661.2 1059.7,683.6 1050.3,685.9" fill="#36698c" stroke="#07121b" stroke-width="0.6" stroke-linejoin="round"/>
<polygon points="1050.3,685.9 1059.7,683.6 1112.7,709.7 1113.9,718.5" fill="#58b0e6" stroke="#07121b" stroke-width="0.6" stroke-linejoin="round"/>
<ellipse cx="1072.3" cy="673.3" rx="4.6" ry="6.2" fill="#4585b0" stroke="#07121b" stroke-width="0.7" transform="rotate(15 1072.3 673.3)"/>
<ellipse cx="1072.0" cy="673.6" rx="2.6" ry="3.6" fill="#3f79a0" stroke="#07121b" stroke-width="0.6" transform="rotate(15 1072.0 673.6)"/>
<polygon points="1086.4,675.8 1091.2,677.3 1098.8,682.1 1111.7,686.7 1111.7,693.5 1101.8,691.2 1092.7,686.7 1086.7,680.6" fill="#4a90c2" stroke="#07121b" stroke-width="0.7" stroke-linejoin="round"/>
<polygon points="1151.1,705.6 1180.6,718.5 1179.8,751.8 1151.1,737.4" fill="#4585b0" stroke="#07121b" stroke-width="0.8" stroke-linejoin="round"/>
<polygon points="1154.5,707.9 1179.8,719.2 1179.1,748.0 1153.3,735.9" fill="#56a052" stroke="#07121b" stroke-width="0.6" stroke-linejoin="round"/>
<polygon points="1186.7,719.2 1192.0,716.2 1217.7,717.7 1217.0,726.1 1210.2,729.4 1207.9,726.1" fill="#36698c" stroke="#07121b" stroke-width="0.8" stroke-linejoin="round"/>
<polygon points="1192.0,721.2 1197.3,721.8 1215.5,724.5 1217.0,726.1 1210.2,729.4 1207.9,726.1" fill="#58b0e6" stroke="#07121b" stroke-width="0.6" stroke-linejoin="round"/>
<polyline points="1210.2,729.4 1207.9,774.5" fill="none" stroke="#07121b" stroke-width="0.9" stroke-linejoin="round" stroke-linecap="round"/>
<defs><linearGradient id="kg" x1="0" y1="0" x2="0.12" y2="1"><stop offset="0" stop-color="#62bdf4"/><stop offset="0.22" stop-color="#66c3fa"/><stop offset="0.6" stop-color="#4a93c8"/><stop offset="0.88" stop-color="#2b5c80"/><stop offset="1" stop-color="#183448"/></linearGradient></defs>
<polygon points="826.8,563.8 827.7,556.9 829.7,554.1 832.2,553.5 831.4,559.2 831.9,563.5" fill="#4a90c2" stroke="#07121b" stroke-width="0.8" stroke-linejoin="round"/>
<polygon points="837.0,563.3 849.5,562.0 854.1,564.3 856.9,569.4 858.6,576.8 858.1,584.2 856.1,588.8 854.1,590.5 841.6,593.3 844.4,589.9 845.6,581.9 843.9,573.4 840.5,566.9" fill="url(#kg)" stroke="#07121b" stroke-width="1.0" stroke-linejoin="round"/>
<polygon points="820.9,567.3 837.0,563.3 840.5,566.9 843.9,573.4 845.6,581.9 844.4,589.9 841.6,593.3 825.4,593.9 827.1,587.0 826.8,579.1 824.5,571.7" fill="url(#kg)" stroke="#07121b" stroke-width="1.0" stroke-linejoin="round"/>
<polygon points="804.4,566.6 812.0,566.1 820.9,567.3 824.5,571.7 826.8,579.1 827.1,587.0 825.4,593.9 823.4,596.1 820.0,596.4 805.2,581.4" fill="#3f79a0" stroke="#07121b" stroke-width="1.0" stroke-linejoin="round"/>
<polygon points="804.4,566.6 807.2,563.8 813.8,563.4 814.6,564.6 826.8,564.2 837.0,563.3 820.9,567.3 812.0,566.1" fill="#58b0e6" stroke="#07121b" stroke-width="0.8" stroke-linejoin="round"/>
<polygon points="600.2,1032.0 1056.1,884.9 1022.3,862.2 575.8,1000.2" fill="#4e5256" filter="url(#bl6)" opacity="0.58"/>
<polygon points="594.6,1052.2 1077.4,893.4 1028.1,860.4 559.6,1005.2" fill="#6a6e72" filter="url(#bl10)" opacity="0.3"/>
<polygon points="549.0,1018.2 597.8,1002.9 311.5,640.0 277.3,642.6" fill="#7a7f84" filter="url(#bl6)" opacity="0.42"/>
<polygon points="593.1,961.9 608.5,951.9 624.3,943.8 663.4,927.4 1033.3,816.3 1038.5,820.0 1037.7,869.6 596.5,1008.2" fill="#35688a" stroke="#07121b" stroke-width="0.9" stroke-linejoin="round"/>
<polyline points="595.3,991.9 1037.9,855.4" fill="none" stroke="#07121b" stroke-width="0.9" stroke-linejoin="round" stroke-linecap="round"/>
<polyline points="804.7,886.1 805.9,901.5 834.6,893.1 836.2,919.9" fill="none" stroke="#07121b" stroke-width="0.9" stroke-linejoin="round" stroke-linecap="round"/>
<polyline points="836.2,919.9 894.2,902.2 894.2,907.0" fill="none" stroke="#07121b" stroke-width="0.95" stroke-linejoin="round" stroke-linecap="round"/>
<polyline points="839.4,924.7 839.4,931.8 823.3,936.9" fill="none" stroke="#07121b" stroke-width="0.95" stroke-linejoin="round" stroke-linecap="round"/>
<polyline points="1032.1,816.6 1031.2,871.6" fill="none" stroke="#07121b" stroke-width="0.7" stroke-linejoin="round" stroke-linecap="round"/>
<polygon points="569.3,1004.8 565.7,959.4 293.4,615.3 297.1,644.8" fill="#427ea7" stroke="#07121b" stroke-width="0.9" stroke-linejoin="round"/>
<polyline points="568.0,988.6 295.8,634.2" fill="none" stroke="#07121b" stroke-width="0.9" stroke-linejoin="round" stroke-linecap="round"/>
<polygon points="569.3,1004.8 565.7,959.4 570.0,962.3 573.6,1008.0" fill="#417ca4" stroke="#417ca4" stroke-width="0.6" stroke-linejoin="round"/>
<polygon points="573.6,1008.0 570.0,962.5 576.7,963.8 580.3,1009.8" fill="#3e779e" stroke="#3e779e" stroke-width="0.6" stroke-linejoin="round"/>
<polygon points="580.3,1009.8 576.8,964.2 584.8,963.7 588.3,1009.9" fill="#3a7197" stroke="#3a7197" stroke-width="0.6" stroke-linejoin="round"/>
<polygon points="588.3,1009.9 584.9,964.2 593.1,961.9 596.5,1008.2" fill="#376b8f" stroke="#376b8f" stroke-width="0.6" stroke-linejoin="round"/>
<polyline points="568.0,988.6 572.3,991.7 579.0,993.4 587.1,993.5 595.3,991.9" fill="none" stroke="#07121b" stroke-width="0.9" stroke-linejoin="round" stroke-linecap="round"/>
<polyline points="569.3,1004.8 573.6,1008.0 580.3,1009.8 588.3,1009.9 596.5,1008.2" fill="none" stroke="#07121b" stroke-width="0.9" stroke-linejoin="round" stroke-linecap="round"/>
<polyline points="569.3,1004.8 565.7,959.4" fill="none" stroke="#07121b" stroke-width="0.95" stroke-linejoin="round" stroke-linecap="round"/>
<polyline points="596.5,1008.2 593.1,961.9" fill="none" stroke="#07121b" stroke-width="0.95" stroke-linejoin="round" stroke-linecap="round"/>
<polygon points="297.1,644.8 293.4,615.3 293.4,613.8 295.4,612.3 299.1,641.7 297.1,643.3" fill="#427ea7" stroke="#427ea7" stroke-width="0.5" stroke-linejoin="round"/>
<polygon points="565.7,959.4 570.0,962.3 576.7,963.8 584.8,963.7 593.1,961.9 608.5,951.9 624.3,943.8 663.4,927.4 1029.7,817.3 1034.7,814.6 1031.0,810.6 619.3,553.1 612.0,551.2 601.0,551.9 349.9,593.1 324.1,600.4 313.8,604.3 303.9,609.8 299.1,610.9 295.4,612.3 293.4,613.8 293.4,615.3" fill="#56a8dc" stroke="#07121b" stroke-width="1.0" stroke-linejoin="round"/>
<polygon points="648.2,915.4 883.6,847.8 519.0,572.8 353.4,599.5" fill="#4f9dd0" stroke="#07121b" stroke-width="0.9" stroke-linejoin="round"/>
<polygon points="749.2,727.9 787.8,719.0 565.7,565.3 534.3,570.4" fill="#4f9dd0" stroke="#07121b" stroke-width="0.9" stroke-linejoin="round"/>
<polygon points="800.1,765.1 840.1,755.2 800.7,727.9 761.7,737.0" fill="#4f9dd0" stroke="#07121b" stroke-width="0.9" stroke-linejoin="round"/>
<polygon points="628.2,777.8 670.6,767.7 652.7,752.4 611.0,762.0" fill="#56a8dc" stroke="#07121b" stroke-width="0.95" stroke-linejoin="round"/>
<polygon points="663.8,810.5 707.6,799.4 690.6,784.8 647.4,795.4" fill="#56a8dc" stroke="#07121b" stroke-width="0.95" stroke-linejoin="round"/>
<polygon points="707.6,799.4 750.2,788.7 693.2,743.0 652.7,752.4" fill="#56a8dc" stroke="#07121b" stroke-width="0.95" stroke-linejoin="round"/>
<polygon points="701.8,749.9 741.5,740.6 729.8,731.8 690.5,740.9" fill="#56a8dc" stroke="#07121b" stroke-width="0.95" stroke-linejoin="round"/>
<polygon points="750.2,788.7 791.4,778.3 782.6,771.6 741.7,781.9" fill="#56a8dc" stroke="#07121b" stroke-width="0.95" stroke-linejoin="round"/>
<polygon points="810.7,710.7 855.0,700.5 639.3,565.5 602.1,571.7" fill="#53a4d8" stroke="#07121b" stroke-width="0.9" stroke-linejoin="round"/>
<polyline points="580.0,562.4 804.7,713.8" fill="none" stroke="#07121b" stroke-width="0.95" stroke-linejoin="round" stroke-linecap="round"/>
<polyline points="602.1,571.7 810.7,710.7" fill="none" stroke="#07121b" stroke-width="0.95" stroke-linejoin="round" stroke-linecap="round"/>
<polyline points="570.8,564.5 849.1,755.4" fill="none" stroke="#07121b" stroke-width="0.7" stroke-linejoin="round" stroke-linecap="round"/>
<polyline points="573.0,556.3 596.1,571.9 638.4,565.0" fill="none" stroke="#07121b" stroke-width="0.9" stroke-linejoin="round" stroke-linecap="round"/>
<polyline points="603.1,573.6 640.3,567.5" fill="none" stroke="#07121b" stroke-width="0.95" stroke-linejoin="round" stroke-linecap="round"/>
<polygon points="804.6,712.1 808.2,711.2 986.7,830.2 982.7,831.4" fill="#3f7eaa" stroke="#07121b" stroke-width="0.8" stroke-linejoin="round"/>
<polyline points="806.6,711.6 984.9,830.8" fill="none" stroke="#6ab8ea" stroke-width="0.6" stroke-linejoin="round" stroke-linecap="round"/>
<path d="M982.3 832.8 q0.3 5 2.6 4.6 q2.2 -0.6 1.8 -5.6 z" fill="#4f9bcd" stroke="#07121b" stroke-width="0.8"/>
<polyline points="648.2,915.4 656.4,930.2" fill="none" stroke="#07121b" stroke-width="0.7" stroke-linejoin="round" stroke-linecap="round"/>
<polygon points="482.1,734.5 521.5,726.1 616.0,819.5 572.2,830.5" fill="#56a8dc" stroke="#07121b" stroke-width="1.2" stroke-linejoin="round"/>
<ellipse cx="543.6" cy="774.0" rx="9.5" ry="4.6" fill="#5a9ecb" opacity="0.85" transform="rotate(-10 543.6 774.0)"/>
<path d="M541.1 774.2l4 -1.6l1.5 1.8l-4 1.6z" fill="#63b0e0" opacity="0.9"/>
<polygon points="542.1,554.4 554.3,562.9 550.3,582.1 535.5,571.2" fill="#4a8fbf" stroke="#07121b" stroke-width="0.95" stroke-linejoin="round"/>
<polygon points="554.3,562.9 573.4,559.8 581.7,576.9 550.3,582.1" fill="#4789b8" stroke="#07121b" stroke-width="0.95" stroke-linejoin="round"/>
<polygon points="554.3,562.9 573.4,559.8 560.9,551.4 542.1,554.4" fill="#5aabdf" stroke="#07121b" stroke-width="0.95" stroke-linejoin="round"/>
<polygon points="557.1,564.9 569.8,573.8 565.8,593.5 550.3,582.1" fill="#4a8fbf" stroke="#07121b" stroke-width="0.95" stroke-linejoin="round"/>
<polygon points="569.8,573.8 589.3,570.6 599.3,591.4 565.1,597.2" fill="#4789b8" stroke="#07121b" stroke-width="0.95" stroke-linejoin="round"/>
<polygon points="569.8,573.8 589.3,570.6 576.3,561.8 557.1,564.9" fill="#5aabdf" stroke="#07121b" stroke-width="0.95" stroke-linejoin="round"/>
<polygon points="572.8,575.9 584.2,583.9 580.2,604.0 565.8,593.5" fill="#4a8fbf" stroke="#07121b" stroke-width="0.95" stroke-linejoin="round"/>
<polygon points="584.2,583.9 604.0,580.6 612.5,598.3 580.2,604.0" fill="#4789b8" stroke="#07121b" stroke-width="0.95" stroke-linejoin="round"/>
<polygon points="584.2,583.9 604.0,580.6 592.3,572.7 572.8,575.9" fill="#5aabdf" stroke="#07121b" stroke-width="0.95" stroke-linejoin="round"/>
<polygon points="587.4,586.1 599.2,594.4 595.1,614.9 580.2,604.0" fill="#4a8fbf" stroke="#07121b" stroke-width="0.95" stroke-linejoin="round"/>
<polygon points="599.2,594.4 619.3,590.9 628.0,609.0 595.1,614.9" fill="#4789b8" stroke="#07121b" stroke-width="0.95" stroke-linejoin="round"/>
<polygon points="599.2,594.4 619.3,590.9 607.2,582.7 587.4,586.1" fill="#5aabdf" stroke="#07121b" stroke-width="0.95" stroke-linejoin="round"/>
<polygon points="602.5,596.7 614.9,605.3 610.7,626.3 595.1,614.9" fill="#4a8fbf" stroke="#07121b" stroke-width="0.95" stroke-linejoin="round"/>
<polygon points="614.9,605.3 635.3,601.7 644.1,620.2 610.7,626.3" fill="#4789b8" stroke="#07121b" stroke-width="0.95" stroke-linejoin="round"/>
<polygon points="614.9,605.3 635.3,601.7 622.6,593.2 602.5,596.7" fill="#5aabdf" stroke="#07121b" stroke-width="0.95" stroke-linejoin="round"/>
<polygon points="618.3,607.7 631.2,616.8 627.0,638.3 610.7,626.3" fill="#4a8fbf" stroke="#07121b" stroke-width="0.95" stroke-linejoin="round"/>
<polygon points="631.2,616.8 651.9,613.0 660.9,631.8 627.0,638.3" fill="#4789b8" stroke="#07121b" stroke-width="0.95" stroke-linejoin="round"/>
<polygon points="631.2,616.8 651.9,613.0 638.7,604.1 618.3,607.7" fill="#5aabdf" stroke="#07121b" stroke-width="0.95" stroke-linejoin="round"/>
<polygon points="634.8,619.3 648.3,628.8 644.0,650.7 627.0,638.3" fill="#4a8fbf" stroke="#07121b" stroke-width="0.95" stroke-linejoin="round"/>
<polygon points="648.3,628.8 669.4,624.8 680.2,647.6 643.1,654.9" fill="#4789b8" stroke="#07121b" stroke-width="0.95" stroke-linejoin="round"/>
<polygon points="648.3,628.8 669.4,624.8 655.6,615.5 634.8,619.3" fill="#5aabdf" stroke="#07121b" stroke-width="0.95" stroke-linejoin="round"/>
<polygon points="657.4,635.1 671.7,645.1 667.2,667.8 649.3,654.6" fill="#4a8fbf" stroke="#07121b" stroke-width="0.95" stroke-linejoin="round"/>
<polygon points="671.7,645.1 693.2,640.9 702.5,660.6 667.2,667.8" fill="#4789b8" stroke="#07121b" stroke-width="0.95" stroke-linejoin="round"/>
<polygon points="671.7,645.1 693.2,640.9 678.7,631.1 657.4,635.1" fill="#5aabdf" stroke="#07121b" stroke-width="0.95" stroke-linejoin="round"/>
<polygon points="675.6,647.9 690.6,658.3 686.0,681.5 667.2,667.8" fill="#4a8fbf" stroke="#07121b" stroke-width="0.95" stroke-linejoin="round"/>
<polygon points="690.6,658.3 712.4,653.9 721.8,674.0 686.0,681.5" fill="#4789b8" stroke="#07121b" stroke-width="0.95" stroke-linejoin="round"/>
<polygon points="690.6,658.3 712.4,653.9 697.2,643.6 675.6,647.9" fill="#5aabdf" stroke="#07121b" stroke-width="0.95" stroke-linejoin="round"/>
<polygon points="694.7,661.2 710.3,672.2 705.7,696.0 686.0,681.5" fill="#4a8fbf" stroke="#07121b" stroke-width="0.95" stroke-linejoin="round"/>
<polygon points="710.3,672.2 732.6,667.6 742.1,688.1 705.7,696.0" fill="#4789b8" stroke="#07121b" stroke-width="0.95" stroke-linejoin="round"/>
<polygon points="710.3,672.2 732.6,667.6 716.6,656.8 694.7,661.2" fill="#5aabdf" stroke="#07121b" stroke-width="0.95" stroke-linejoin="round"/>
<polygon points="714.7,675.2 731.1,686.7 726.4,711.1 705.7,696.0" fill="#4a8fbf" stroke="#07121b" stroke-width="0.95" stroke-linejoin="round"/>
<polygon points="731.1,686.7 753.7,681.9 763.5,702.9 726.4,711.1" fill="#4789b8" stroke="#07121b" stroke-width="0.95" stroke-linejoin="round"/>
<polygon points="731.1,686.7 753.7,681.9 737.0,670.6 714.7,675.2" fill="#5aabdf" stroke="#07121b" stroke-width="0.95" stroke-linejoin="round"/>
<polygon points="735.7,689.9 751.3,700.8 746.5,725.8 726.4,711.1" fill="#4a8fbf" stroke="#07121b" stroke-width="0.95" stroke-linejoin="round"/>
<polygon points="751.3,700.8 774.2,695.8 786.0,721.3 745.5,730.6" fill="#4789b8" stroke="#07121b" stroke-width="0.95" stroke-linejoin="round"/>
<polygon points="751.3,700.8 774.2,695.8 758.4,685.0 735.7,689.9" fill="#5aabdf" stroke="#07121b" stroke-width="0.95" stroke-linejoin="round"/>
<polygon points="775.0,717.5 783.0,723.1 780.5,750.8 762.9,737.9" fill="#4a8fbf" stroke="#07121b" stroke-width="0.95" stroke-linejoin="round"/>
<polygon points="783.0,723.1 806.6,717.6 819.1,741.5 780.5,750.8" fill="#4789b8" stroke="#07121b" stroke-width="0.95" stroke-linejoin="round"/>
<polygon points="783.0,723.1 806.6,717.6 798.4,712.1 775.0,717.5" fill="#5aabdf" stroke="#07121b" stroke-width="0.95" stroke-linejoin="round"/>
<polygon points="793.0,730.1 801.5,736.0 799.0,764.3 780.5,750.8" fill="#4a8fbf" stroke="#07121b" stroke-width="0.95" stroke-linejoin="round"/>
<polygon points="801.5,736.0 825.4,730.4 840.6,759.3 798.5,769.8" fill="#4789b8" stroke="#07121b" stroke-width="0.95" stroke-linejoin="round"/>
<polygon points="801.5,736.0 825.4,730.4 816.7,724.5 793.0,730.1" fill="#5aabdf" stroke="#07121b" stroke-width="0.95" stroke-linejoin="round"/>
<polygon points="493.7,562.0 498.9,565.9 497.4,586.0 487.3,577.9" fill="#4a8fbf" stroke="#07121b" stroke-width="0.95" stroke-linejoin="round"/>
<polygon points="498.9,565.9 520.9,562.5 529.5,580.8 497.4,586.0" fill="#4789b8" stroke="#07121b" stroke-width="0.95" stroke-linejoin="round"/>
<polygon points="498.9,565.9 520.9,562.5 515.6,558.6 493.7,562.0" fill="#5aabdf" stroke="#07121b" stroke-width="0.95" stroke-linejoin="round"/>
<polygon points="504.0,569.9 509.3,574.0 507.9,594.4 497.4,586.0" fill="#4a8fbf" stroke="#07121b" stroke-width="0.95" stroke-linejoin="round"/>
<polygon points="509.3,574.0 531.6,570.4 540.4,589.0 507.9,594.4" fill="#4789b8" stroke="#07121b" stroke-width="0.95" stroke-linejoin="round"/>
<polygon points="509.3,574.0 531.6,570.4 526.2,566.4 504.0,569.9" fill="#5aabdf" stroke="#07121b" stroke-width="0.95" stroke-linejoin="round"/>
<polygon points="514.7,578.1 520.2,582.3 518.7,603.1 507.9,594.4" fill="#4a8fbf" stroke="#07121b" stroke-width="0.95" stroke-linejoin="round"/>
<polygon points="520.2,582.3 542.7,578.6 551.7,597.5 518.7,603.1" fill="#4789b8" stroke="#07121b" stroke-width="0.95" stroke-linejoin="round"/>
<polygon points="520.2,582.3 542.7,578.6 537.1,574.4 514.7,578.1" fill="#5aabdf" stroke="#07121b" stroke-width="0.95" stroke-linejoin="round"/>
<polygon points="525.7,586.5 531.3,590.9 529.9,612.1 518.7,603.1" fill="#4a8fbf" stroke="#07121b" stroke-width="0.95" stroke-linejoin="round"/>
<polygon points="531.3,590.9 554.2,587.0 563.3,606.2 529.9,612.1" fill="#4789b8" stroke="#07121b" stroke-width="0.95" stroke-linejoin="round"/>
<polygon points="531.3,590.9 554.2,587.0 548.4,582.7 525.7,586.5" fill="#5aabdf" stroke="#07121b" stroke-width="0.95" stroke-linejoin="round"/>
<polygon points="537.0,595.2 542.9,599.8 541.5,621.4 529.9,612.1" fill="#4a8fbf" stroke="#07121b" stroke-width="0.95" stroke-linejoin="round"/>
<polygon points="542.9,599.8 566.1,595.8 575.4,615.3 541.5,621.4" fill="#4789b8" stroke="#07121b" stroke-width="0.95" stroke-linejoin="round"/>
<polygon points="542.9,599.8 566.1,595.8 560.1,591.3 537.0,595.2" fill="#5aabdf" stroke="#07121b" stroke-width="0.95" stroke-linejoin="round"/>
<polygon points="548.8,604.3 554.9,609.0 553.5,631.0 541.5,621.4" fill="#4a8fbf" stroke="#07121b" stroke-width="0.95" stroke-linejoin="round"/>
<polygon points="554.9,609.0 578.5,604.9 587.9,624.8 553.5,631.0" fill="#4789b8" stroke="#07121b" stroke-width="0.95" stroke-linejoin="round"/>
<polygon points="554.9,609.0 578.5,604.9 572.2,600.2 548.8,604.3" fill="#5aabdf" stroke="#07121b" stroke-width="0.95" stroke-linejoin="round"/>
<polygon points="561.1,613.7 567.4,618.5 566.0,641.0 553.5,631.0" fill="#4a8fbf" stroke="#07121b" stroke-width="0.95" stroke-linejoin="round"/>
<polygon points="567.4,618.5 591.2,614.3 600.8,634.5 566.0,641.0" fill="#4789b8" stroke="#07121b" stroke-width="0.95" stroke-linejoin="round"/>
<polygon points="567.4,618.5 591.2,614.3 584.7,609.5 561.1,613.7" fill="#5aabdf" stroke="#07121b" stroke-width="0.95" stroke-linejoin="round"/>
<polygon points="573.7,623.4 580.3,628.4 578.9,651.4 566.0,641.0" fill="#4a8fbf" stroke="#07121b" stroke-width="0.95" stroke-linejoin="round"/>
<polygon points="580.3,628.4 604.5,624.0 614.2,644.6 578.9,651.4" fill="#4789b8" stroke="#07121b" stroke-width="0.95" stroke-linejoin="round"/>
<polygon points="580.3,628.4 604.5,624.0 597.7,619.0 573.7,623.4" fill="#5aabdf" stroke="#07121b" stroke-width="0.95" stroke-linejoin="round"/>
<polygon points="586.9,633.5 593.7,638.7 592.3,662.1 578.9,651.4" fill="#4a8fbf" stroke="#07121b" stroke-width="0.95" stroke-linejoin="round"/>
<polygon points="593.7,638.7 618.2,634.1 628.1,655.1 592.3,662.1" fill="#4789b8" stroke="#07121b" stroke-width="0.95" stroke-linejoin="round"/>
<polygon points="593.7,638.7 618.2,634.1 611.2,629.0 586.9,633.5" fill="#5aabdf" stroke="#07121b" stroke-width="0.95" stroke-linejoin="round"/>
<polygon points="600.6,644.0 607.6,649.4 606.3,673.3 592.3,662.1" fill="#4a8fbf" stroke="#07121b" stroke-width="0.95" stroke-linejoin="round"/>
<polygon points="607.6,649.4 632.5,644.6 642.6,666.0 606.3,673.3" fill="#4789b8" stroke="#07121b" stroke-width="0.95" stroke-linejoin="round"/>
<polygon points="607.6,649.4 632.5,644.6 625.2,639.3 600.6,644.0" fill="#5aabdf" stroke="#07121b" stroke-width="0.95" stroke-linejoin="round"/>
<polygon points="614.7,654.9 622.1,660.5 620.7,684.9 606.3,673.3" fill="#4a8fbf" stroke="#07121b" stroke-width="0.95" stroke-linejoin="round"/>
<polygon points="622.1,660.5 647.3,655.5 657.6,677.4 620.7,684.9" fill="#4789b8" stroke="#07121b" stroke-width="0.95" stroke-linejoin="round"/>
<polygon points="622.1,660.5 647.3,655.5 639.8,650.0 614.7,654.9" fill="#5aabdf" stroke="#07121b" stroke-width="0.95" stroke-linejoin="round"/>
<polygon points="629.5,666.2 637.2,672.1 635.8,697.0 620.7,684.9" fill="#4a8fbf" stroke="#07121b" stroke-width="0.95" stroke-linejoin="round"/>
<polygon points="637.2,672.1 662.8,666.9 673.2,689.1 635.8,697.0" fill="#4789b8" stroke="#07121b" stroke-width="0.95" stroke-linejoin="round"/>
<polygon points="637.2,672.1 662.8,666.9 654.9,661.1 629.5,666.2" fill="#5aabdf" stroke="#07121b" stroke-width="0.95" stroke-linejoin="round"/>
<polygon points="644.9,678.0 652.8,684.1 651.5,709.6 635.8,697.0" fill="#4a8fbf" stroke="#07121b" stroke-width="0.95" stroke-linejoin="round"/>
<polygon points="652.8,684.1 678.8,678.7 689.5,701.4 651.5,709.6" fill="#4789b8" stroke="#07121b" stroke-width="0.95" stroke-linejoin="round"/>
<polygon points="652.8,684.1 678.8,678.7 670.7,672.7 644.9,678.0" fill="#5aabdf" stroke="#07121b" stroke-width="0.95" stroke-linejoin="round"/>
<polygon points="660.9,690.3 669.2,696.6 667.9,722.7 651.5,709.6" fill="#4a8fbf" stroke="#07121b" stroke-width="0.95" stroke-linejoin="round"/>
<polygon points="669.2,696.6 695.6,691.0 706.4,714.2 667.9,722.7" fill="#4789b8" stroke="#07121b" stroke-width="0.95" stroke-linejoin="round"/>
<polygon points="669.2,696.6 695.6,691.0 687.0,684.8 660.9,690.3" fill="#5aabdf" stroke="#07121b" stroke-width="0.95" stroke-linejoin="round"/>
<polygon points="677.6,703.1 691.0,713.4 689.7,740.2 667.9,722.7" fill="#4a8fbf" stroke="#07121b" stroke-width="0.95" stroke-linejoin="round"/>
<polygon points="691.0,713.4 717.8,707.4 731.1,735.7 689.5,745.4" fill="#4789b8" stroke="#07121b" stroke-width="0.95" stroke-linejoin="round"/>
<polygon points="691.0,713.4 717.8,707.4 704.1,697.3 677.6,703.1" fill="#5aabdf" stroke="#07121b" stroke-width="0.95" stroke-linejoin="round"/>
<polygon points="713.0,730.3 722.5,737.5 721.3,765.5 702.7,750.6" fill="#4a8fbf" stroke="#07121b" stroke-width="0.95" stroke-linejoin="round"/>
<polygon points="722.5,737.5 750.1,731.1 761.6,755.8 721.3,765.5" fill="#4789b8" stroke="#07121b" stroke-width="0.95" stroke-linejoin="round"/>
<polygon points="722.5,737.5 750.1,731.1 740.4,724.0 713.0,730.3" fill="#5aabdf" stroke="#07121b" stroke-width="0.95" stroke-linejoin="round"/>
<polygon points="732.0,744.9 741.9,752.5 740.8,781.1 721.3,765.5" fill="#4a8fbf" stroke="#07121b" stroke-width="0.95" stroke-linejoin="round"/>
<polygon points="741.9,752.5 769.9,745.8 784.0,775.8 740.5,786.7" fill="#4789b8" stroke="#07121b" stroke-width="0.95" stroke-linejoin="round"/>
<polygon points="741.9,752.5 769.9,745.8 759.8,738.3 732.0,744.9" fill="#5aabdf" stroke="#07121b" stroke-width="0.95" stroke-linejoin="round"/>
<polygon points="762.4,768.2 772.7,776.1 771.7,805.9 751.1,789.4" fill="#4a8fbf" stroke="#07121b" stroke-width="0.95" stroke-linejoin="round"/>
<polygon points="772.7,776.1 801.4,768.9 813.6,795.0 771.7,805.9" fill="#4789b8" stroke="#07121b" stroke-width="0.95" stroke-linejoin="round"/>
<polygon points="772.7,776.1 801.4,768.9 790.9,761.2 762.4,768.2" fill="#5aabdf" stroke="#07121b" stroke-width="0.95" stroke-linejoin="round"/>
<polygon points="783.4,784.3 794.2,792.6 793.2,823.2 771.7,805.9" fill="#4a8fbf" stroke="#07121b" stroke-width="0.95" stroke-linejoin="round"/>
<polygon points="794.2,792.6 823.4,785.1 835.8,811.7 793.2,823.2" fill="#4789b8" stroke="#07121b" stroke-width="0.95" stroke-linejoin="round"/>
<polygon points="794.2,792.6 823.4,785.1 812.4,777.0 783.4,784.3" fill="#5aabdf" stroke="#07121b" stroke-width="0.95" stroke-linejoin="round"/>
<polygon points="805.5,801.2 816.8,809.9 815.9,841.3 793.2,823.2" fill="#4a8fbf" stroke="#07121b" stroke-width="0.95" stroke-linejoin="round"/>
<polygon points="816.8,809.9 846.4,802.0 859.1,829.3 815.9,841.3" fill="#4789b8" stroke="#07121b" stroke-width="0.95" stroke-linejoin="round"/>
<polygon points="816.8,809.9 846.4,802.0 834.8,793.5 805.5,801.2" fill="#5aabdf" stroke="#07121b" stroke-width="0.95" stroke-linejoin="round"/>
<polygon points="828.6,819.0 840.5,828.1 839.6,860.4 815.9,841.3" fill="#4a8fbf" stroke="#07121b" stroke-width="0.95" stroke-linejoin="round"/>
<polygon points="840.5,828.1 870.6,819.8 883.6,847.8 839.6,860.4" fill="#4789b8" stroke="#07121b" stroke-width="0.95" stroke-linejoin="round"/>
<polygon points="840.5,828.1 870.6,819.8 858.4,810.9 828.6,819.0" fill="#5aabdf" stroke="#07121b" stroke-width="0.95" stroke-linejoin="round"/>
<polygon points="461.2,567.1 473.6,577.2 472.1,597.8 454.9,583.2" fill="#4a8fbf" stroke="#07121b" stroke-width="0.95" stroke-linejoin="round"/>
<polygon points="473.6,577.2 496.3,573.6 505.2,592.3 472.1,597.8" fill="#4789b8" stroke="#07121b" stroke-width="0.95" stroke-linejoin="round"/>
<polygon points="473.6,577.2 496.3,573.6 483.5,563.6 461.2,567.1" fill="#5aabdf" stroke="#07121b" stroke-width="0.95" stroke-linejoin="round"/>
<polygon points="478.7,581.4 483.9,585.6 482.3,606.6 472.1,597.8" fill="#4a8fbf" stroke="#07121b" stroke-width="0.95" stroke-linejoin="round"/>
<polygon points="483.9,585.6 506.9,581.9 516.0,600.9 482.3,606.6" fill="#4789b8" stroke="#07121b" stroke-width="0.95" stroke-linejoin="round"/>
<polygon points="483.9,585.6 506.9,581.9 501.5,577.7 478.7,581.4" fill="#5aabdf" stroke="#07121b" stroke-width="0.95" stroke-linejoin="round"/>
<polygon points="489.1,589.9 494.5,594.4 493.0,615.7 482.3,606.6" fill="#4a8fbf" stroke="#07121b" stroke-width="0.95" stroke-linejoin="round"/>
<polygon points="494.5,594.4 517.9,590.5 527.1,609.8 493.0,615.7" fill="#4789b8" stroke="#07121b" stroke-width="0.95" stroke-linejoin="round"/>
<polygon points="494.5,594.4 517.9,590.5 512.3,586.1 489.1,589.9" fill="#5aabdf" stroke="#07121b" stroke-width="0.95" stroke-linejoin="round"/>
<polygon points="500.0,598.8 505.6,603.4 504.0,625.2 493.0,615.7" fill="#4a8fbf" stroke="#07121b" stroke-width="0.95" stroke-linejoin="round"/>
<polygon points="505.6,603.4 529.2,599.3 538.6,619.0 504.0,625.2" fill="#4789b8" stroke="#07121b" stroke-width="0.95" stroke-linejoin="round"/>
<polygon points="505.6,603.4 529.2,599.3 523.4,594.8 500.0,598.8" fill="#5aabdf" stroke="#07121b" stroke-width="0.95" stroke-linejoin="round"/>
<polygon points="511.2,608.0 517.0,612.7 515.4,634.9 504.0,625.2" fill="#4a8fbf" stroke="#07121b" stroke-width="0.95" stroke-linejoin="round"/>
<polygon points="517.0,612.7 541.0,608.5 550.5,628.6 515.4,634.9" fill="#4789b8" stroke="#07121b" stroke-width="0.95" stroke-linejoin="round"/>
<polygon points="517.0,612.7 541.0,608.5 535.0,603.9 511.2,608.0" fill="#5aabdf" stroke="#07121b" stroke-width="0.95" stroke-linejoin="round"/>
<polygon points="522.8,617.5 528.8,622.4 527.3,645.1 515.4,634.9" fill="#4a8fbf" stroke="#07121b" stroke-width="0.95" stroke-linejoin="round"/>
<polygon points="528.8,622.4 553.1,618.1 562.8,638.5 527.3,645.1" fill="#4789b8" stroke="#07121b" stroke-width="0.95" stroke-linejoin="round"/>
<polygon points="528.8,622.4 553.1,618.1 547.0,613.2 522.8,617.5" fill="#5aabdf" stroke="#07121b" stroke-width="0.95" stroke-linejoin="round"/>
<polygon points="534.9,627.4 541.1,632.5 539.6,655.6 527.3,645.1" fill="#4a8fbf" stroke="#07121b" stroke-width="0.95" stroke-linejoin="round"/>
<polygon points="541.1,632.5 565.8,628.0 575.6,648.7 539.6,655.6" fill="#4789b8" stroke="#07121b" stroke-width="0.95" stroke-linejoin="round"/>
<polygon points="541.1,632.5 565.8,628.0 559.4,622.9 534.9,627.4" fill="#5aabdf" stroke="#07121b" stroke-width="0.95" stroke-linejoin="round"/>
<polygon points="547.4,637.6 553.9,642.9 552.3,666.5 539.6,655.6" fill="#4a8fbf" stroke="#07121b" stroke-width="0.95" stroke-linejoin="round"/>
<polygon points="553.9,642.9 578.9,638.2 588.9,659.4 552.3,666.5" fill="#4789b8" stroke="#07121b" stroke-width="0.95" stroke-linejoin="round"/>
<polygon points="553.9,642.9 578.9,638.2 572.2,633.0 547.4,637.6" fill="#5aabdf" stroke="#07121b" stroke-width="0.95" stroke-linejoin="round"/>
<polygon points="560.4,648.2 567.1,653.8 565.6,677.9 552.3,666.5" fill="#4a8fbf" stroke="#07121b" stroke-width="0.95" stroke-linejoin="round"/>
<polygon points="567.1,653.8 592.5,648.9 602.7,670.5 565.6,677.9" fill="#4789b8" stroke="#07121b" stroke-width="0.95" stroke-linejoin="round"/>
<polygon points="567.1,653.8 592.5,648.9 585.6,643.5 560.4,648.2" fill="#5aabdf" stroke="#07121b" stroke-width="0.95" stroke-linejoin="round"/>
<polygon points="573.9,659.3 580.9,665.0 579.4,689.7 565.6,677.9" fill="#4a8fbf" stroke="#07121b" stroke-width="0.95" stroke-linejoin="round"/>
<polygon points="580.9,665.0 606.7,660.0 617.1,682.0 579.4,689.7" fill="#4789b8" stroke="#07121b" stroke-width="0.95" stroke-linejoin="round"/>
<polygon points="580.9,665.0 606.7,660.0 599.5,654.4 573.9,659.3" fill="#5aabdf" stroke="#07121b" stroke-width="0.95" stroke-linejoin="round"/>
<polygon points="587.9,670.8 595.2,676.8 593.7,701.9 579.4,689.7" fill="#4a8fbf" stroke="#07121b" stroke-width="0.95" stroke-linejoin="round"/>
<polygon points="595.2,676.8 621.4,671.5 632.0,693.9 593.7,701.9" fill="#4789b8" stroke="#07121b" stroke-width="0.95" stroke-linejoin="round"/>
<polygon points="595.2,676.8 621.4,671.5 613.9,665.7 587.9,670.8" fill="#5aabdf" stroke="#07121b" stroke-width="0.95" stroke-linejoin="round"/>
<polygon points="602.6,682.8 610.2,689.0 608.7,714.7 593.7,701.9" fill="#4a8fbf" stroke="#07121b" stroke-width="0.95" stroke-linejoin="round"/>
<polygon points="610.2,689.0 636.8,683.5 647.5,706.4 608.7,714.7" fill="#4789b8" stroke="#07121b" stroke-width="0.95" stroke-linejoin="round"/>
<polygon points="610.2,689.0 636.8,683.5 629.0,677.4 602.6,682.8" fill="#5aabdf" stroke="#07121b" stroke-width="0.95" stroke-linejoin="round"/>
<polygon points="617.8,695.3 625.7,701.8 624.3,728.1 608.7,714.7" fill="#4a8fbf" stroke="#07121b" stroke-width="0.95" stroke-linejoin="round"/>
<polygon points="625.7,701.8 652.7,696.1 663.7,719.4 624.3,728.1" fill="#4789b8" stroke="#07121b" stroke-width="0.95" stroke-linejoin="round"/>
<polygon points="625.7,701.8 652.7,696.1 644.6,689.7 617.8,695.3" fill="#5aabdf" stroke="#07121b" stroke-width="0.95" stroke-linejoin="round"/>
<polygon points="719.7,778.7 729.7,786.9 728.4,817.2 708.5,800.2" fill="#4a8fbf" stroke="#07121b" stroke-width="0.95" stroke-linejoin="round"/>
<polygon points="729.7,786.9 759.3,779.5 771.7,805.9 728.4,817.2" fill="#4789b8" stroke="#07121b" stroke-width="0.95" stroke-linejoin="round"/>
<polygon points="729.7,786.9 759.3,779.5 749.1,771.5 719.7,778.7" fill="#5aabdf" stroke="#07121b" stroke-width="0.95" stroke-linejoin="round"/>
<polygon points="740.0,795.3 750.5,803.9 749.3,835.0 728.4,817.2" fill="#4a8fbf" stroke="#07121b" stroke-width="0.95" stroke-linejoin="round"/>
<polygon points="750.5,803.9 780.6,796.1 793.2,823.2 749.3,835.0" fill="#4789b8" stroke="#07121b" stroke-width="0.95" stroke-linejoin="round"/>
<polygon points="750.5,803.9 780.6,796.1 769.9,787.8 740.0,795.3" fill="#5aabdf" stroke="#07121b" stroke-width="0.95" stroke-linejoin="round"/>
<polygon points="761.3,812.8 772.3,821.8 771.2,853.7 749.3,835.0" fill="#4a8fbf" stroke="#07121b" stroke-width="0.95" stroke-linejoin="round"/>
<polygon points="772.3,821.8 802.9,813.6 815.9,841.3 771.2,853.7" fill="#4789b8" stroke="#07121b" stroke-width="0.95" stroke-linejoin="round"/>
<polygon points="772.3,821.8 802.9,813.6 791.7,804.8 761.3,812.8" fill="#5aabdf" stroke="#07121b" stroke-width="0.95" stroke-linejoin="round"/>
<polygon points="783.7,831.1 795.3,840.6 794.2,873.4 771.2,853.7" fill="#4a8fbf" stroke="#07121b" stroke-width="0.95" stroke-linejoin="round"/>
<polygon points="795.3,840.6 826.4,832.0 839.6,860.4 794.2,873.4" fill="#4789b8" stroke="#07121b" stroke-width="0.95" stroke-linejoin="round"/>
<polygon points="795.3,840.6 826.4,832.0 814.6,822.8 783.7,831.1" fill="#5aabdf" stroke="#07121b" stroke-width="0.95" stroke-linejoin="round"/>
<polygon points="428.0,572.3 432.7,576.4 431.0,597.0 421.8,588.5" fill="#4a8fbf" stroke="#07121b" stroke-width="0.95" stroke-linejoin="round"/>
<polygon points="432.7,576.4 455.7,572.8 464.6,591.4 431.0,597.0" fill="#4789b8" stroke="#07121b" stroke-width="0.95" stroke-linejoin="round"/>
<polygon points="432.7,576.4 455.7,572.8 450.8,568.7 428.0,572.3" fill="#5aabdf" stroke="#07121b" stroke-width="0.95" stroke-linejoin="round"/>
<polygon points="437.4,580.5 442.3,584.8 440.6,605.7 431.0,597.0" fill="#4a8fbf" stroke="#07121b" stroke-width="0.95" stroke-linejoin="round"/>
<polygon points="442.3,584.8 465.5,581.0 474.6,600.0 440.6,605.7" fill="#4789b8" stroke="#07121b" stroke-width="0.95" stroke-linejoin="round"/>
<polygon points="442.3,584.8 465.5,581.0 460.5,576.8 437.4,580.5" fill="#5aabdf" stroke="#07121b" stroke-width="0.95" stroke-linejoin="round"/>
<polygon points="447.1,589.0 452.2,593.4 450.5,614.8 440.6,605.7" fill="#4a8fbf" stroke="#07121b" stroke-width="0.95" stroke-linejoin="round"/>
<polygon points="452.2,593.4 475.8,589.6 485.0,608.9 450.5,614.8" fill="#4789b8" stroke="#07121b" stroke-width="0.95" stroke-linejoin="round"/>
<polygon points="452.2,593.4 475.8,589.6 470.6,585.2 447.1,589.0" fill="#5aabdf" stroke="#07121b" stroke-width="0.95" stroke-linejoin="round"/>
<polygon points="457.2,597.9 462.4,602.4 460.7,624.2 450.5,614.8" fill="#4a8fbf" stroke="#07121b" stroke-width="0.95" stroke-linejoin="round"/>
<polygon points="462.4,602.4 486.3,598.4 495.7,618.1 460.7,624.2" fill="#4789b8" stroke="#07121b" stroke-width="0.95" stroke-linejoin="round"/>
<polygon points="462.4,602.4 486.3,598.4 481.0,593.9 457.2,597.9" fill="#5aabdf" stroke="#07121b" stroke-width="0.95" stroke-linejoin="round"/>
<polygon points="467.6,607.0 473.0,611.7 471.3,633.9 460.7,624.2" fill="#4a8fbf" stroke="#07121b" stroke-width="0.95" stroke-linejoin="round"/>
<polygon points="473.0,611.7 497.3,607.6 506.8,627.6 471.3,633.9" fill="#4789b8" stroke="#07121b" stroke-width="0.95" stroke-linejoin="round"/>
<polygon points="473.0,611.7 497.3,607.6 491.7,602.9 467.6,607.0" fill="#5aabdf" stroke="#07121b" stroke-width="0.95" stroke-linejoin="round"/>
<polygon points="478.4,616.5 484.0,621.4 482.3,644.0 471.3,633.9" fill="#4a8fbf" stroke="#07121b" stroke-width="0.95" stroke-linejoin="round"/>
<polygon points="484.0,621.4 508.7,617.1 518.3,637.4 482.3,644.0" fill="#4789b8" stroke="#07121b" stroke-width="0.95" stroke-linejoin="round"/>
<polygon points="484.0,621.4 508.7,617.1 502.9,612.2 478.4,616.5" fill="#5aabdf" stroke="#07121b" stroke-width="0.95" stroke-linejoin="round"/>
<polygon points="489.6,626.3 495.4,631.4 493.8,654.5 482.3,644.0" fill="#4a8fbf" stroke="#07121b" stroke-width="0.95" stroke-linejoin="round"/>
<polygon points="495.4,631.4 520.4,626.9 530.3,647.7 493.8,654.5" fill="#4789b8" stroke="#07121b" stroke-width="0.95" stroke-linejoin="round"/>
<polygon points="495.4,631.4 520.4,626.9 514.5,621.9 489.6,626.3" fill="#5aabdf" stroke="#07121b" stroke-width="0.95" stroke-linejoin="round"/>
<polygon points="501.3,636.5 507.3,641.8 505.6,665.4 493.8,654.5" fill="#4a8fbf" stroke="#07121b" stroke-width="0.95" stroke-linejoin="round"/>
<polygon points="507.3,641.8 532.7,637.2 542.7,658.3 505.6,665.4" fill="#4789b8" stroke="#07121b" stroke-width="0.95" stroke-linejoin="round"/>
<polygon points="507.3,641.8 532.7,637.2 526.5,632.0 501.3,636.5" fill="#5aabdf" stroke="#07121b" stroke-width="0.95" stroke-linejoin="round"/>
<polygon points="513.3,647.1 519.6,652.6 517.9,676.7 505.6,665.4" fill="#4a8fbf" stroke="#07121b" stroke-width="0.95" stroke-linejoin="round"/>
<polygon points="519.6,652.6 545.4,647.8 555.6,669.3 517.9,676.7" fill="#4789b8" stroke="#07121b" stroke-width="0.95" stroke-linejoin="round"/>
<polygon points="519.6,652.6 545.4,647.8 538.9,642.4 513.3,647.1" fill="#5aabdf" stroke="#07121b" stroke-width="0.95" stroke-linejoin="round"/>
<polygon points="525.9,658.1 532.4,663.9 530.8,688.4 517.9,676.7" fill="#4a8fbf" stroke="#07121b" stroke-width="0.95" stroke-linejoin="round"/>
<polygon points="532.4,663.9 558.6,658.8 569.0,680.8 530.8,688.4" fill="#4789b8" stroke="#07121b" stroke-width="0.95" stroke-linejoin="round"/>
<polygon points="532.4,663.9 558.6,658.8 551.9,653.2 525.9,658.1" fill="#5aabdf" stroke="#07121b" stroke-width="0.95" stroke-linejoin="round"/>
<polygon points="539.0,669.6 545.7,675.6 544.1,700.7 530.8,688.4" fill="#4a8fbf" stroke="#07121b" stroke-width="0.95" stroke-linejoin="round"/>
<polygon points="545.7,675.6 572.3,670.3 582.9,692.7 544.1,700.7" fill="#4789b8" stroke="#07121b" stroke-width="0.95" stroke-linejoin="round"/>
<polygon points="545.7,675.6 572.3,670.3 565.3,664.5 539.0,669.6" fill="#5aabdf" stroke="#07121b" stroke-width="0.95" stroke-linejoin="round"/>
<polygon points="552.6,681.5 559.6,687.7 558.0,713.4 544.1,700.7" fill="#4a8fbf" stroke="#07121b" stroke-width="0.95" stroke-linejoin="round"/>
<polygon points="559.6,687.7 586.6,682.3 597.4,705.1 558.0,713.4" fill="#4789b8" stroke="#07121b" stroke-width="0.95" stroke-linejoin="round"/>
<polygon points="559.6,687.7 586.6,682.3 579.3,676.2 552.6,681.5" fill="#5aabdf" stroke="#07121b" stroke-width="0.95" stroke-linejoin="round"/>
<polygon points="566.7,694.0 574.1,700.4 572.5,726.7 558.0,713.4" fill="#4a8fbf" stroke="#07121b" stroke-width="0.95" stroke-linejoin="round"/>
<polygon points="574.1,700.4 601.5,694.8 612.5,718.0 572.5,726.7" fill="#4789b8" stroke="#07121b" stroke-width="0.95" stroke-linejoin="round"/>
<polygon points="574.1,700.4 601.5,694.8 593.9,688.4 566.7,694.0" fill="#5aabdf" stroke="#07121b" stroke-width="0.95" stroke-linejoin="round"/>
<polygon points="581.5,706.9 589.2,713.7 587.6,740.5 572.5,726.7" fill="#4a8fbf" stroke="#07121b" stroke-width="0.95" stroke-linejoin="round"/>
<polygon points="589.2,713.7 617.1,707.7 628.3,731.5 587.6,740.5" fill="#4789b8" stroke="#07121b" stroke-width="0.95" stroke-linejoin="round"/>
<polygon points="589.2,713.7 617.1,707.7 609.1,701.1 581.5,706.9" fill="#5aabdf" stroke="#07121b" stroke-width="0.95" stroke-linejoin="round"/>
<polygon points="596.7,720.3 612.2,733.8 610.2,761.3 587.7,740.7" fill="#4a8fbf" stroke="#07121b" stroke-width="0.95" stroke-linejoin="round"/>
<polygon points="612.2,733.8 681.4,718.5 694.5,746.9 609.9,766.6" fill="#4789b8" stroke="#07121b" stroke-width="0.95" stroke-linejoin="round"/>
<polygon points="612.2,733.8 681.4,718.5 660.3,702.0 596.7,720.3" fill="#5aabdf" stroke="#07121b" stroke-width="0.95" stroke-linejoin="round"/>
<polygon points="639.2,757.6 647.9,765.2 646.4,794.5 629.0,778.5" fill="#4a8fbf" stroke="#07121b" stroke-width="0.95" stroke-linejoin="round"/>
<polygon points="647.9,765.2 677.5,758.3 691.9,788.8 646.1,800.1" fill="#4789b8" stroke="#07121b" stroke-width="0.95" stroke-linejoin="round"/>
<polygon points="647.9,765.2 677.5,758.3 668.5,750.8 639.2,757.6" fill="#5aabdf" stroke="#07121b" stroke-width="0.95" stroke-linejoin="round"/>
<polygon points="675.7,789.5 685.2,798.0 683.8,828.8 664.7,811.2" fill="#4a8fbf" stroke="#07121b" stroke-width="0.95" stroke-linejoin="round"/>
<polygon points="685.2,798.0 715.8,790.3 728.4,817.2 683.8,828.8" fill="#4789b8" stroke="#07121b" stroke-width="0.95" stroke-linejoin="round"/>
<polygon points="685.2,798.0 715.8,790.3 705.9,782.1 675.7,789.5" fill="#5aabdf" stroke="#07121b" stroke-width="0.95" stroke-linejoin="round"/>
<polygon points="695.2,806.7 705.3,815.5 703.9,847.2 683.8,828.8" fill="#4a8fbf" stroke="#07121b" stroke-width="0.95" stroke-linejoin="round"/>
<polygon points="705.3,815.5 736.4,807.5 749.3,835.0 703.9,847.2" fill="#4789b8" stroke="#07121b" stroke-width="0.95" stroke-linejoin="round"/>
<polygon points="705.3,815.5 736.4,807.5 726.0,798.9 695.2,806.7" fill="#5aabdf" stroke="#07121b" stroke-width="0.95" stroke-linejoin="round"/>
<polygon points="715.8,824.7 726.3,834.0 725.0,866.6 703.9,847.2" fill="#4a8fbf" stroke="#07121b" stroke-width="0.95" stroke-linejoin="round"/>
<polygon points="726.3,834.0 758.0,825.6 771.2,853.7 725.0,866.6" fill="#4789b8" stroke="#07121b" stroke-width="0.95" stroke-linejoin="round"/>
<polygon points="726.3,834.0 758.0,825.6 747.1,816.5 715.8,824.7" fill="#5aabdf" stroke="#07121b" stroke-width="0.95" stroke-linejoin="round"/>
<polygon points="737.4,843.7 748.5,853.5 747.2,887.0 725.0,866.6" fill="#4a8fbf" stroke="#07121b" stroke-width="0.95" stroke-linejoin="round"/>
<polygon points="748.5,853.5 780.7,844.6 794.2,873.4 747.2,887.0" fill="#4789b8" stroke="#07121b" stroke-width="0.95" stroke-linejoin="round"/>
<polygon points="748.5,853.5 780.7,844.6 769.3,835.1 737.4,843.7" fill="#5aabdf" stroke="#07121b" stroke-width="0.95" stroke-linejoin="round"/>
<polygon points="394.1,577.6 409.9,592.5 408.1,613.8 388.0,593.9" fill="#4a8fbf" stroke="#07121b" stroke-width="0.95" stroke-linejoin="round"/>
<polygon points="409.9,592.5 433.8,588.7 443.0,608.0 408.1,613.8" fill="#4789b8" stroke="#07121b" stroke-width="0.95" stroke-linejoin="round"/>
<polygon points="409.9,592.5 433.8,588.7 417.4,573.9 394.1,577.6" fill="#5aabdf" stroke="#07121b" stroke-width="0.95" stroke-linejoin="round"/>
<polygon points="414.6,596.9 419.4,601.5 417.6,623.2 408.1,613.8" fill="#4a8fbf" stroke="#07121b" stroke-width="0.95" stroke-linejoin="round"/>
<polygon points="419.4,601.5 443.6,597.5 453.0,617.1 417.6,623.2" fill="#4789b8" stroke="#07121b" stroke-width="0.95" stroke-linejoin="round"/>
<polygon points="419.4,601.5 443.6,597.5 438.6,593.0 414.6,596.9" fill="#5aabdf" stroke="#07121b" stroke-width="0.95" stroke-linejoin="round"/>
<polygon points="424.2,606.0 429.2,610.8 427.4,632.9 417.6,623.2" fill="#4a8fbf" stroke="#07121b" stroke-width="0.95" stroke-linejoin="round"/>
<polygon points="429.2,610.8 453.8,606.6 463.3,626.6 427.4,632.9" fill="#4789b8" stroke="#07121b" stroke-width="0.95" stroke-linejoin="round"/>
<polygon points="429.2,610.8 453.8,606.6 448.6,602.0 424.2,606.0" fill="#5aabdf" stroke="#07121b" stroke-width="0.95" stroke-linejoin="round"/>
<polygon points="434.2,615.5 439.4,620.4 437.6,643.0 427.4,632.9" fill="#4a8fbf" stroke="#07121b" stroke-width="0.95" stroke-linejoin="round"/>
<polygon points="439.4,620.4 464.3,616.1 474.0,636.4 437.6,643.0" fill="#4789b8" stroke="#07121b" stroke-width="0.95" stroke-linejoin="round"/>
<polygon points="439.4,620.4 464.3,616.1 459.0,611.3 434.2,615.5" fill="#5aabdf" stroke="#07121b" stroke-width="0.95" stroke-linejoin="round"/>
<polygon points="444.6,625.3 449.9,630.4 448.1,653.4 437.6,643.0" fill="#4a8fbf" stroke="#07121b" stroke-width="0.95" stroke-linejoin="round"/>
<polygon points="449.9,630.4 475.3,625.9 485.2,646.6 448.1,653.4" fill="#4789b8" stroke="#07121b" stroke-width="0.95" stroke-linejoin="round"/>
<polygon points="449.9,630.4 475.3,625.9 469.7,620.9 444.6,625.3" fill="#5aabdf" stroke="#07121b" stroke-width="0.95" stroke-linejoin="round"/>
<polygon points="455.3,635.5 460.9,640.7 459.1,664.2 448.1,653.4" fill="#4a8fbf" stroke="#07121b" stroke-width="0.95" stroke-linejoin="round"/>
<polygon points="460.9,640.7 486.6,636.1 496.7,657.2 459.1,664.2" fill="#4789b8" stroke="#07121b" stroke-width="0.95" stroke-linejoin="round"/>
<polygon points="460.9,640.7 486.6,636.1 480.9,630.9 455.3,635.5" fill="#5aabdf" stroke="#07121b" stroke-width="0.95" stroke-linejoin="round"/>
<polygon points="466.5,646.0 472.3,651.5 470.5,675.5 459.1,664.2" fill="#4a8fbf" stroke="#07121b" stroke-width="0.95" stroke-linejoin="round"/>
<polygon points="472.3,651.5 498.4,646.7 508.7,668.1 470.5,675.5" fill="#4789b8" stroke="#07121b" stroke-width="0.95" stroke-linejoin="round"/>
<polygon points="472.3,651.5 498.4,646.7 492.4,641.3 466.5,646.0" fill="#5aabdf" stroke="#07121b" stroke-width="0.95" stroke-linejoin="round"/>
<polygon points="478.1,657.0 484.1,662.7 482.3,687.2 470.5,675.5" fill="#4a8fbf" stroke="#07121b" stroke-width="0.95" stroke-linejoin="round"/>
<polygon points="484.1,662.7 510.7,657.7 521.1,679.6 482.3,687.2" fill="#4789b8" stroke="#07121b" stroke-width="0.95" stroke-linejoin="round"/>
<polygon points="484.1,662.7 510.7,657.7 504.4,652.1 478.1,657.0" fill="#5aabdf" stroke="#07121b" stroke-width="0.95" stroke-linejoin="round"/>
<polygon points="490.2,668.4 496.5,674.3 494.7,699.4 482.3,687.2" fill="#4a8fbf" stroke="#07121b" stroke-width="0.95" stroke-linejoin="round"/>
<polygon points="496.5,674.3 523.4,669.1 534.0,691.4 494.7,699.4" fill="#4789b8" stroke="#07121b" stroke-width="0.95" stroke-linejoin="round"/>
<polygon points="496.5,674.3 523.4,669.1 516.9,663.3 490.2,668.4" fill="#5aabdf" stroke="#07121b" stroke-width="0.95" stroke-linejoin="round"/>
<polygon points="502.8,680.3 509.3,686.5 507.5,712.1 494.7,699.4" fill="#4a8fbf" stroke="#07121b" stroke-width="0.95" stroke-linejoin="round"/>
<polygon points="509.3,686.5 536.7,681.0 547.5,703.8 507.5,712.1" fill="#4789b8" stroke="#07121b" stroke-width="0.95" stroke-linejoin="round"/>
<polygon points="509.3,686.5 536.7,681.0 529.9,675.0 502.8,680.3" fill="#5aabdf" stroke="#07121b" stroke-width="0.95" stroke-linejoin="round"/>
<polygon points="515.9,692.7 522.7,699.1 520.9,725.3 507.5,712.1" fill="#4a8fbf" stroke="#07121b" stroke-width="0.95" stroke-linejoin="round"/>
<polygon points="522.7,699.1 550.5,693.4 561.6,716.7 520.9,725.3" fill="#4789b8" stroke="#07121b" stroke-width="0.95" stroke-linejoin="round"/>
<polygon points="522.7,699.1 550.5,693.4 543.5,687.1 515.9,692.7" fill="#5aabdf" stroke="#07121b" stroke-width="0.95" stroke-linejoin="round"/>
<polygon points="529.5,705.6 536.6,712.3 534.8,739.1 520.9,725.3" fill="#4a8fbf" stroke="#07121b" stroke-width="0.95" stroke-linejoin="round"/>
<polygon points="536.6,712.3 564.9,706.4 576.2,730.1 534.8,739.1" fill="#4789b8" stroke="#07121b" stroke-width="0.95" stroke-linejoin="round"/>
<polygon points="536.6,712.3 564.9,706.4 557.6,699.8 529.5,705.6" fill="#5aabdf" stroke="#07121b" stroke-width="0.95" stroke-linejoin="round"/>
<polygon points="543.8,719.0 568.8,742.7 567.0,770.9 534.8,739.1" fill="#4a8fbf" stroke="#07121b" stroke-width="0.95" stroke-linejoin="round"/>
<polygon points="568.8,742.7 598.1,736.2 612.1,765.8 566.7,776.3" fill="#4789b8" stroke="#07121b" stroke-width="0.95" stroke-linejoin="round"/>
<polygon points="568.8,742.7 598.1,736.2 572.3,713.0 543.8,719.0" fill="#5aabdf" stroke="#07121b" stroke-width="0.95" stroke-linejoin="round"/>
<polygon points="579.0,752.4 587.0,759.9 585.3,788.9 569.4,773.2" fill="#4a8fbf" stroke="#07121b" stroke-width="0.95" stroke-linejoin="round"/>
<polygon points="587.0,759.9 616.9,753.1 629.0,778.5 585.3,788.9" fill="#4789b8" stroke="#07121b" stroke-width="0.95" stroke-linejoin="round"/>
<polygon points="587.0,759.9 616.9,753.1 608.7,745.7 579.0,752.4" fill="#5aabdf" stroke="#07121b" stroke-width="0.95" stroke-linejoin="round"/>
<polygon points="595.3,767.7 603.6,775.6 601.9,805.4 585.3,788.9" fill="#4a8fbf" stroke="#07121b" stroke-width="0.95" stroke-linejoin="round"/>
<polygon points="603.6,775.6 634.1,768.5 646.4,794.5 601.9,805.4" fill="#4789b8" stroke="#07121b" stroke-width="0.95" stroke-linejoin="round"/>
<polygon points="603.6,775.6 634.1,768.5 625.5,760.7 595.3,767.7" fill="#5aabdf" stroke="#07121b" stroke-width="0.95" stroke-linejoin="round"/>
<polygon points="612.3,783.8 621.1,792.1 619.4,822.7 601.9,805.4" fill="#4a8fbf" stroke="#07121b" stroke-width="0.95" stroke-linejoin="round"/>
<polygon points="621.1,792.1 652.1,784.6 664.7,811.2 619.4,822.7" fill="#4789b8" stroke="#07121b" stroke-width="0.95" stroke-linejoin="round"/>
<polygon points="621.1,792.1 652.1,784.6 643.0,776.5 612.3,783.8" fill="#5aabdf" stroke="#07121b" stroke-width="0.95" stroke-linejoin="round"/>
<polygon points="630.2,800.7 639.4,809.4 637.7,840.8 619.4,822.7" fill="#4a8fbf" stroke="#07121b" stroke-width="0.95" stroke-linejoin="round"/>
<polygon points="639.4,809.4 670.9,801.5 683.8,828.8 637.7,840.8" fill="#4789b8" stroke="#07121b" stroke-width="0.95" stroke-linejoin="round"/>
<polygon points="639.4,809.4 670.9,801.5 661.5,793.0 630.2,800.7" fill="#5aabdf" stroke="#07121b" stroke-width="0.95" stroke-linejoin="round"/>
<polygon points="648.9,818.5 658.6,827.6 657.0,859.8 637.7,840.8" fill="#4a8fbf" stroke="#07121b" stroke-width="0.95" stroke-linejoin="round"/>
<polygon points="658.6,827.6 690.7,819.3 703.9,847.2 657.0,859.8" fill="#4789b8" stroke="#07121b" stroke-width="0.95" stroke-linejoin="round"/>
<polygon points="658.6,827.6 690.7,819.3 680.8,810.4 648.9,818.5" fill="#5aabdf" stroke="#07121b" stroke-width="0.95" stroke-linejoin="round"/>
<polygon points="668.7,837.1 678.8,846.7 677.2,879.9 657.0,859.8" fill="#4a8fbf" stroke="#07121b" stroke-width="0.95" stroke-linejoin="round"/>
<polygon points="678.8,846.7 711.5,838.0 725.0,866.6 677.2,879.9" fill="#4789b8" stroke="#07121b" stroke-width="0.95" stroke-linejoin="round"/>
<polygon points="678.8,846.7 711.5,838.0 701.1,828.6 668.7,837.1" fill="#5aabdf" stroke="#07121b" stroke-width="0.95" stroke-linejoin="round"/>
<polygon points="689.4,856.7 700.1,866.8 698.6,900.9 677.2,879.9" fill="#4a8fbf" stroke="#07121b" stroke-width="0.95" stroke-linejoin="round"/>
<polygon points="700.1,866.8 733.4,857.6 747.2,887.0 698.6,900.9" fill="#4789b8" stroke="#07121b" stroke-width="0.95" stroke-linejoin="round"/>
<polygon points="700.1,866.8 733.4,857.6 722.4,847.8 689.4,856.7" fill="#5aabdf" stroke="#07121b" stroke-width="0.95" stroke-linejoin="round"/>
<polygon points="372.2,596.1 376.2,600.2 372.7,620.1 367.6,614.7" fill="#4a8fbf" stroke="#07121b" stroke-width="0.95" stroke-linejoin="round"/>
<polygon points="376.2,600.2 400.7,596.2 408.4,614.1 372.7,620.1" fill="#4789b8" stroke="#07121b" stroke-width="0.95" stroke-linejoin="round"/>
<polygon points="376.2,600.2 400.7,596.2 396.6,592.2 372.2,596.1" fill="#5aabdf" stroke="#07121b" stroke-width="0.95" stroke-linejoin="round"/>
<polygon points="377.4,601.4 381.4,605.5 377.9,625.7 372.7,620.1" fill="#4a8fbf" stroke="#07121b" stroke-width="0.95" stroke-linejoin="round"/>
<polygon points="381.4,605.5 406.1,601.5 413.9,619.6 377.9,625.7" fill="#4789b8" stroke="#07121b" stroke-width="0.95" stroke-linejoin="round"/>
<polygon points="381.4,605.5 406.1,601.5 401.9,597.4 377.4,601.4" fill="#5aabdf" stroke="#07121b" stroke-width="0.95" stroke-linejoin="round"/>
<polygon points="382.6,606.8 386.8,611.0 383.2,631.4 377.9,625.7" fill="#4a8fbf" stroke="#07121b" stroke-width="0.95" stroke-linejoin="round"/>
<polygon points="386.8,611.0 411.7,606.9 419.5,625.1 383.2,631.4" fill="#4789b8" stroke="#07121b" stroke-width="0.95" stroke-linejoin="round"/>
<polygon points="386.8,611.0 411.7,606.9 407.4,602.7 382.6,606.8" fill="#5aabdf" stroke="#07121b" stroke-width="0.95" stroke-linejoin="round"/>
<polygon points="389.8,614.2 404.7,629.4 402.8,652.4 383.3,631.5" fill="#4a8fbf" stroke="#07121b" stroke-width="0.95" stroke-linejoin="round"/>
<polygon points="404.7,629.4 430.4,625.0 440.3,645.6 402.8,652.4" fill="#4789b8" stroke="#07121b" stroke-width="0.95" stroke-linejoin="round"/>
<polygon points="404.7,629.4 430.4,625.0 414.9,610.0 389.8,614.2" fill="#5aabdf" stroke="#07121b" stroke-width="0.95" stroke-linejoin="round"/>
<polygon points="409.7,634.5 429.8,655.1 427.9,679.3 402.8,652.4" fill="#4a8fbf" stroke="#07121b" stroke-width="0.95" stroke-linejoin="round"/>
<polygon points="429.8,655.1 456.5,650.3 466.8,671.9 427.9,679.3" fill="#4789b8" stroke="#07121b" stroke-width="0.95" stroke-linejoin="round"/>
<polygon points="429.8,655.1 456.5,650.3 435.6,630.0 409.7,634.5" fill="#5aabdf" stroke="#07121b" stroke-width="0.95" stroke-linejoin="round"/>
<polygon points="435.3,660.7 457.4,683.4 455.5,708.8 427.9,679.3" fill="#4a8fbf" stroke="#07121b" stroke-width="0.95" stroke-linejoin="round"/>
<polygon points="457.4,683.4 485.1,678.0 496.0,700.7 455.5,708.8" fill="#4789b8" stroke="#07121b" stroke-width="0.95" stroke-linejoin="round"/>
<polygon points="457.4,683.4 485.1,678.0 462.1,655.7 435.3,660.7" fill="#5aabdf" stroke="#07121b" stroke-width="0.95" stroke-linejoin="round"/>
<polygon points="463.4,689.5 469.6,695.9 467.7,721.9 455.5,708.8" fill="#4a8fbf" stroke="#07121b" stroke-width="0.95" stroke-linejoin="round"/>
<polygon points="469.6,695.9 497.8,690.3 508.9,713.4 467.7,721.9" fill="#4789b8" stroke="#07121b" stroke-width="0.95" stroke-linejoin="round"/>
<polygon points="469.6,695.9 497.8,690.3 491.4,684.0 463.4,689.5" fill="#5aabdf" stroke="#07121b" stroke-width="0.95" stroke-linejoin="round"/>
<polygon points="475.9,702.3 482.4,708.9 480.4,735.6 467.7,721.9" fill="#4a8fbf" stroke="#07121b" stroke-width="0.95" stroke-linejoin="round"/>
<polygon points="482.4,708.9 511.0,703.1 524.5,731.2 480.0,740.7" fill="#4789b8" stroke="#07121b" stroke-width="0.95" stroke-linejoin="round"/>
<polygon points="482.4,708.9 511.0,703.1 504.3,696.6 475.9,702.3" fill="#5aabdf" stroke="#07121b" stroke-width="0.95" stroke-linejoin="round"/>
<polygon points="583.3,812.3 592.0,821.3 590.1,853.2 572.7,834.5" fill="#4a8fbf" stroke="#07121b" stroke-width="0.95" stroke-linejoin="round"/>
<polygon points="592.0,821.3 624.6,813.1 637.7,840.8 590.1,853.2" fill="#4789b8" stroke="#07121b" stroke-width="0.95" stroke-linejoin="round"/>
<polygon points="592.0,821.3 624.6,813.1 615.5,804.3 583.3,812.3" fill="#5aabdf" stroke="#07121b" stroke-width="0.95" stroke-linejoin="round"/>
<polygon points="601.1,830.6 610.3,840.0 608.5,872.9 590.1,853.2" fill="#4a8fbf" stroke="#07121b" stroke-width="0.95" stroke-linejoin="round"/>
<polygon points="610.3,840.0 643.5,831.5 657.0,859.8 608.5,872.9" fill="#4789b8" stroke="#07121b" stroke-width="0.95" stroke-linejoin="round"/>
<polygon points="610.3,840.0 643.5,831.5 634.0,822.2 601.1,830.6" fill="#5aabdf" stroke="#07121b" stroke-width="0.95" stroke-linejoin="round"/>
<polygon points="619.9,849.9 629.6,859.8 627.8,893.6 608.5,872.9" fill="#4a8fbf" stroke="#07121b" stroke-width="0.95" stroke-linejoin="round"/>
<polygon points="629.6,859.8 663.5,850.8 677.2,879.9 627.8,893.6" fill="#4789b8" stroke="#07121b" stroke-width="0.95" stroke-linejoin="round"/>
<polygon points="629.6,859.8 663.5,850.8 653.4,841.1 619.9,849.9" fill="#5aabdf" stroke="#07121b" stroke-width="0.95" stroke-linejoin="round"/>
<polygon points="639.7,870.1 650.0,880.6 648.2,915.4 627.8,893.6" fill="#4a8fbf" stroke="#07121b" stroke-width="0.95" stroke-linejoin="round"/>
<polygon points="650.0,880.6 684.5,871.1 698.6,900.9 648.2,915.4" fill="#4789b8" stroke="#07121b" stroke-width="0.95" stroke-linejoin="round"/>
<polygon points="650.0,880.6 684.5,871.1 673.9,860.9 639.7,870.1" fill="#5aabdf" stroke="#07121b" stroke-width="0.95" stroke-linejoin="round"/>
</svg>
<div class="abs" id="blacktop"></div>
<div class="abs" id="titlebar"><span class="t">pc-8801fh_001</span></div>
<div class="abs" id="toolbar"></div>
<div class="abs" id="brand1">AUTODESK<span style="font-size:4.5px;vertical-align:7px">®</span></div>
<div class="abs" id="brand2">123D<span style="font-size:4.5px;vertical-align:8px">®</span> DESIGN</div>
<div class="abs btn" id="prem"><div class="a">プレミアム版登録</div><div class="b">(商業利用向け)</div></div>
<div class="abs btn" id="signin">サインイン</div>
<div class="abs" id="help">?</div>
<div class="abs" id="navbar"></div>
<div class="abs" id="strip"></div><div class="abs" id="stripblue"></div>
<div class="abs" id="gridhdr">グリッドを編集</div>
<div class="abs ginp" style="left:1741px">1</div><div class="abs ginp" style="left:1821px">1</div>
<div class="abs glab" style="left:1741px">長さスナップ</div><div class="abs glab" style="left:1821px">角度スナップ</div>
<div class="abs" id="taskbar"></div><div class="abs" id="search"></div><div class="abs" id="tbact"></div>
<div class="abs" id="rightwhite"></div>
<svg class="abs" style="left:0;top:0" width="1928" height="1056" viewBox="0 0 1928 1056" font-family="Liberation Sans, Noto Sans CJK JP, sans-serif">
<defs><linearGradient id="sepg" x1="0" y1="0" x2="0" y2="1"><stop offset="0" stop-color="#999" stop-opacity="0"/><stop offset="0.5" stop-color="#888"/><stop offset="1" stop-color="#999" stop-opacity="0"/></linearGradient><linearGradient id="lg1" x1="0" y1="0" x2="1" y2="1"><stop offset="0" stop-color="#c3ced5"/><stop offset="1" stop-color="#8fa8b6"/></linearGradient><linearGradient id="vcL" x1="0" y1="0" x2="0" y2="1"><stop offset="0" stop-color="#f4f4f4"/><stop offset="1" stop-color="#d2d2d2"/></linearGradient><linearGradient id="vcF" x1="0" y1="0" x2="0" y2="1"><stop offset="0" stop-color="#f6f6f6"/><stop offset="1" stop-color="#d9d9d9"/></linearGradient><filter id="vsh" x="-30%" y="-30%" width="160%" height="160%"><feGaussianBlur stdDeviation="4"/></filter><clipPath id="logoclip"><rect x="8" y="39" width="43" height="43.5" rx="7.5"/></clipPath></defs>
<polygon points="1.9,13 18,13 10,24.8" fill="#1a9fd6"/><polygon points="18,13 10,17 10,24.8" fill="#0d6a92"/><polygon points="1.9,13 18,13 10,17" fill="#3cb6e4"/>
<path d="M1799 18.5h10" stroke="#111" stroke-width="1"/>
<path d="M1844.5 16.5h7v7h-7zM1846.5 16.5v-2h7v7h-2" stroke="#111" stroke-width="1" fill="none"/>
<path d="M1890 13l10 10M1900 13l-10 10" stroke="#111" stroke-width="1.1"/>
<g clip-path="url(#logoclip)"><rect x="8" y="39" width="43" height="43.5" fill="url(#lg1)"/><polygon points="46.3,50.3 60,64 60,90 44,90 29.9,75.8" fill="#6b98ae" opacity="0.9"/><polygon points="13.1,50.3 29.9,55.9 29.9,75.8" fill="#1b9fd7"/><polygon points="46.3,50.3 29.9,55.9 29.9,75.8" fill="#0f6e95"/><polygon points="13.1,50.3 46.3,50.3 29.9,55.9" fill="#b9e4f3"/></g>
<path d="M198.2 62.6l6.7 4.4 6.7-4.4" stroke="#222" stroke-width="2" fill="none"/>
<g fill="#b8b8b8"><polygon points="615.2,58 623.5,53.1 623.5,62.9"/><path d="M623 56.6c6 0 10 1.5 12.6 5.6l-1.6 0.9c-2.2-3-5.5-4-11-3.8z"/><polygon points="677.7,58 669.4,53.1 669.4,62.9"/><path d="M669.9 56.6c-6 0-10 1.5-12.6 5.6l1.6 0.9c2.2-3 5.5-4 11-3.8z"/></g>
<rect x="710.4" y="46" width="1" height="27" fill="url(#sepg)"/>
<rect x="796.3" y="46" width="1" height="27" fill="url(#sepg)"/>
<rect x="1269.5" y="46" width="1" height="27" fill="url(#sepg)"/>
<rect x="744.2" y="49.4" width="20.4" height="20.4" fill="none" stroke="#222" stroke-width="1" stroke-dasharray="1 1.2"/>
<rect x="756" y="44" width="12" height="12" fill="#f0f0f0"/>
<polygon points="747.1,57.6 753.0,61.0 753.0,67.8 747.1,64.4" fill="#6a6a6a"/><polygon points="753.0,61.0 758.9,57.6 758.9,64.4 753.0,67.8" fill="#2b2b2b"/><polygon points="753.0,54.2 758.9,57.6 753.0,61.0 747.1,57.6" fill="#ffffff" stroke="#2b2b2b" stroke-width="0.8" stroke-linejoin="round"/>
<path d="M761.7 45.7v9.6M756.9 50.5h9.6" stroke="#222" stroke-width="1.1"/><path d="M761.7 44.6l2 2.4h-4zM761.7 56.4l2-2.4h-4zM755.8 50.5l2.4-2v4zM767.6 50.5l-2.4-2v4z" fill="#222"/>
<polygon points="775.5,79.2 775.5,83.2 771.5,83.2" fill="#9a9a9a"/>
<circle cx="844" cy="55.6" r="7.3" fill="#fff" stroke="#222" stroke-width="1"/>
<polygon points="829.3,56.8 837.0,61.2 837.0,70.1 829.3,65.7" fill="#6a6a6a"/><polygon points="837.0,61.2 844.7,56.8 844.7,65.7 837.0,70.1" fill="#2b2b2b"/><polygon points="837.0,52.3 844.7,56.8 837.0,61.2 829.3,56.8" fill="#ffffff" stroke="#2b2b2b" stroke-width="0.8" stroke-linejoin="round"/>
<polygon points="862.0,79.2 862.0,83.2 858.0,83.2" fill="#9a9a9a"/>
<path d="M883 52.5c-9-5-14 5-8.5 12.5 2 2.5 4 3 6 1.5" fill="none" stroke="#222" stroke-width="1.2"/><circle cx="883" cy="53" r="1.9" fill="#222"/><circle cx="875.8" cy="63" r="1.9" fill="#222"/><polygon points="891.5,48.5 896,52 887,63 882.5,59.5" fill="#2b2b2b"/><polygon points="882,60.5 886,63.8 880.8,66" fill="#2b2b2b"/>
<polygon points="904.0,79.2 904.0,83.2 900.0,83.2" fill="#9a9a9a"/>
<polygon points="918.3,56.5 926.0,61.0 926.0,69.9 918.3,65.5" fill="#6a6a6a"/><polygon points="926.0,61.0 933.7,56.5 933.7,65.5 926.0,69.9" fill="#2b2b2b"/><polygon points="926.0,52.1 933.7,56.5 926.0,61.0 918.3,56.5" fill="#ffffff" stroke="#2b2b2b" stroke-width="0.8" stroke-linejoin="round"/>
<path d="M927.5 55.5l7-9" stroke="#222" stroke-width="2.2"/><path d="M927.8 55l-2.2 3.3" stroke="#222" stroke-width="1"/>
<polygon points="947.7,79.2 947.7,83.2 943.7,83.2" fill="#9a9a9a"/>
<polygon points="958.3,56.5 966.0,61.0 966.0,69.9 958.3,65.5" fill="#6a6a6a"/><polygon points="966.0,61.0 973.7,56.5 973.7,65.5 966.0,69.9" fill="#2b2b2b"/><polygon points="966.0,52.1 973.7,56.5 966.0,61.0 958.3,56.5" fill="#ffffff" stroke="#2b2b2b" stroke-width="0.8" stroke-linejoin="round"/>
<path d="M974.3 47v8.5l7 0" fill="none" stroke="#222" stroke-width="1.1"/><path d="M974.3 45.8l1.9 2.6h-3.8zM982.8 55.5l-2.6-1.9v3.8z" fill="#222"/>
<polygon points="990.5,79.2 990.5,83.2 986.5,83.2" fill="#9a9a9a"/>
<polygon points="1002.8,51.9 1006.8,54.2 1006.8,58.8 1002.8,56.5" fill="#6a6a6a"/><polygon points="1006.8,54.2 1010.8,51.9 1010.8,56.5 1006.8,58.8" fill="#2b2b2b"/><polygon points="1006.8,49.6 1010.8,51.9 1006.8,54.2 1002.8,51.9" fill="#ffffff" stroke="#2b2b2b" stroke-width="0.6" stroke-linejoin="round"/>
<polygon points="1013.2,51.9 1017.2,54.2 1017.2,58.8 1013.2,56.5" fill="#6a6a6a"/><polygon points="1017.2,54.2 1021.2,51.9 1021.2,56.5 1017.2,58.8" fill="#2b2b2b"/><polygon points="1017.2,49.6 1021.2,51.9 1017.2,54.2 1013.2,51.9" fill="#ffffff" stroke="#2b2b2b" stroke-width="0.6" stroke-linejoin="round"/>
<polygon points="1002.8,62.3 1006.8,64.6 1006.8,69.2 1002.8,66.9" fill="#6a6a6a"/><polygon points="1006.8,64.6 1010.8,62.3 1010.8,66.9 1006.8,69.2" fill="#2b2b2b"/><polygon points="1006.8,60.0 1010.8,62.3 1006.8,64.6 1002.8,62.3" fill="#ffffff" stroke="#2b2b2b" stroke-width="0.6" stroke-linejoin="round"/>
<polygon points="1013.2,62.3 1017.2,64.6 1017.2,69.2 1013.2,66.9" fill="#6a6a6a"/><polygon points="1017.2,64.6 1021.2,62.3 1021.2,66.9 1017.2,69.2" fill="#2b2b2b"/><polygon points="1017.2,60.0 1021.2,62.3 1017.2,64.6 1013.2,62.3" fill="#ffffff" stroke="#2b2b2b" stroke-width="0.6" stroke-linejoin="round"/>
<polygon points="1033.4,79.2 1033.4,83.2 1029.4,83.2" fill="#9a9a9a"/>
<circle cx="1059.7" cy="56.3" r="6" fill="#fff" stroke="#222" stroke-width="0.9"/>
<polygon points="1047.8,59.2 1053.3,62.4 1053.3,68.8 1047.8,65.6" fill="#6a6a6a"/><polygon points="1053.3,62.4 1058.8,59.2 1058.8,65.6 1053.3,68.8" fill="#2b2b2b"/><polygon points="1053.3,56.0 1058.8,59.2 1053.3,62.4 1047.8,59.2" fill="#ffffff" stroke="#2b2b2b" stroke-width="0.7" stroke-linejoin="round"/>
<rect x="1045.0" y="48.9" width="1.8" height="1.8" fill="#222"/>
<rect x="1065.0" y="48.9" width="1.8" height="1.8" fill="#222"/>
<rect x="1045.0" y="68.9" width="1.8" height="1.8" fill="#222"/>
<rect x="1065.0" y="68.9" width="1.8" height="1.8" fill="#222"/>
<polygon points="1076.6,79.2 1076.6,83.2 1072.6,83.2" fill="#9a9a9a"/>
<polygon points="1089.2,55.2 1098.5,59.8 1098.5,70.1 1089.2,65.4" fill="#6a6a6a"/><polygon points="1098.5,59.8 1109,54.6 1109,64.9 1098.5,70.1" fill="#2b2b2b"/><polygon points="1103.8,57.2 1109,54.6 1109,64.9 1103.8,67.5" fill="#6a6a6a"/><polygon points="1089.2,55.2 1099.7,50 1109,54.6 1098.5,59.8" fill="#fff" stroke="#222" stroke-width="0.8"/><path d="M1094.4 52.6l9.3 4.6" stroke="#222" stroke-width="0.8"/>
<polygon points="1119.8,79.2 1119.8,83.2 1115.8,83.2" fill="#9a9a9a"/>
<polygon points="1131.0,53.8 1140.4,59.2 1140.4,70.1 1131.0,64.7" fill="#6a6a6a"/><polygon points="1140.4,59.2 1149.8,53.8 1149.8,64.7 1140.4,70.1" fill="#2b2b2b"/><polygon points="1140.4,48.3 1149.8,53.8 1140.4,59.2 1131.0,53.8" fill="#ffffff" stroke="#2b2b2b" stroke-width="0.7" stroke-linejoin="round"/>
<rect x="1146.6" y="49.3" width="5.2" height="20.2" fill="#fff" stroke="#222" stroke-width="1"/><path d="M1149 52h2.8M1149.8 54.5h2M1149 57h2.8M1149.8 59.5h2M1149 62h2.8M1149.8 64.5h2M1149 67h2.8" stroke="#222" stroke-width="0.8"/>
<text x="1184" y="70" font-size="26.5" font-weight="bold" text-anchor="middle" fill="#2b2b2b" stroke="#2b2b2b" stroke-width="1.4" font-family="Liberation Sans, sans-serif">T</text>
<g transform="rotate(35 1228 58)"><path d="M1219.5 68v-10a8.5 8.5 0 0 1 17 0v10h-4.6v-10a3.9 3.9 0 0 0 -7.8 0v10z" fill="#fff" stroke="#2b2b2b" stroke-width="1"/><rect x="1219.5" y="64" width="4.6" height="4.6" fill="#2b2b2b"/><rect x="1231.9" y="64" width="4.6" height="4.6" fill="#2b2b2b"/></g>
<polygon points="1303,54 1313.5,59 1313.5,69.7 1303,64.5" fill="#fff"/><path d="M1303 56.5l10.5 5M1303 59l10.5 5M1303 61.5l10.5 5M1303 64l10.5 5.2" stroke="#222" stroke-width="1.3"/><polygon points="1313.5,59 1324.2,53.8 1324.2,64.5 1313.5,69.7" fill="#fff"/><path d="M1313.5 62.5l6-7M1313.5 66l9-10.8M1314 69.4l10.2-12M1317.5 67.8l6.7-8M1321 66l3.2-3.8" stroke="#222" stroke-width="1.3"/><polygon points="1303,54 1313.7,48.8 1324.2,53.8 1313.5,59" fill="#fff" stroke="#222" stroke-width="0.9"/>
<ellipse cx="1860" cy="176" rx="34" ry="9" fill="#888" opacity="0.35" filter="url(#vsh)"/>
<polygon points="1825.2,120.3 1849.1,129.3 1850.4,180.9 1826.9,163.8" fill="url(#vcL)" stroke="#c9c9c9" stroke-width="0.8"/>
<polygon points="1849.1,129.3 1892.6,122.5 1890.4,168.1 1850.4,180.9" fill="url(#vcF)" stroke="#c9c9c9" stroke-width="0.8"/>
<polygon points="1825.2,120.3 1857.6,116.1 1892.6,122.5 1849.1,129.3" fill="#f7f7f7" stroke="#c9c9c9" stroke-width="0.8"/>
<polygon points="1844.4,137.8 1849.1,138.7 1858,137.8 1858,168.5 1850.4,171.5 1844.8,168.5" fill="#a9d8ea"/>
<path d="M1849.6 139v31" stroke="#8fb9c9" stroke-width="0.7" stroke-dasharray="6 2"/>
<text transform="matrix(0.62 0.235 0 1 1829.3 155.5)" font-size="23" fill="#1a1a1a">左</text>
<text transform="matrix(1.0 -0.157 0 1 1858.5 162)" font-size="25" fill="#1a1a1a">前</text>
<text transform="matrix(-0.9 -0.16 0.55 -0.19 1867 119)" font-size="13" fill="#222" opacity="0.75">上</text>
<path d="M1871.5 222.5v17.5M1862.7 231.3h17.5" stroke="#222" stroke-width="1.1"/>
<path d="M1871.5 221l2.3 3.2h-4.6zM1871.5 241.6l2.3-3.2h-4.6zM1861.2 231.3l3.2-2.3v4.6zM1881.8 231.3l-3.2-2.3v4.6z" fill="#222"/>
<polygon points="1865.3,263.3 1870.8,266.5 1870.8,272.9 1865.3,269.7" fill="#6a6a6a"/><polygon points="1870.8,266.5 1876.3,263.3 1876.3,269.7 1870.8,272.9" fill="#2b2b2b"/><polygon points="1870.8,260.1 1876.3,263.3 1870.8,266.5 1865.3,263.3" fill="#ffffff" stroke="#2b2b2b" stroke-width="0.7" stroke-linejoin="round"/>
<path d="M1862.5 261.5a10.5 10.5 0 0 0 3.5 13.5M1873.5 256.3a10.5 10.5 0 0 1 5.5 15.5" fill="none" stroke="#222" stroke-width="1.1"/><path d="M1872 254.6l3.6 0.6-1.8 3.1zM1867.7 276.8l-3.6-0.4 1.6-3.2z" fill="#222"/>
<circle cx="1868.8" cy="299.2" r="7" fill="#fff" stroke="#222" stroke-width="1.3"/><path d="M1874.3 304.3l5 4.8" stroke="#222" stroke-width="3.2"/>
<rect x="1857" y="322.2" width="25" height="1" fill="url(#sepH)"/><rect x="1857" y="506.4" width="25" height="1" fill="url(#sepH)"/>
<defs><linearGradient id="sepH" x1="0" y1="0" x2="1" y2="0"><stop offset="0" stop-color="#888" stop-opacity="0"/><stop offset="0.5" stop-color="#777"/><stop offset="1" stop-color="#888" stop-opacity="0"/></linearGradient></defs>
<polygon points="1865.4,342.7 1870.8,345.8 1870.8,352.0 1865.4,348.9" fill="#6a6a6a"/><polygon points="1870.8,345.8 1876.2,342.7 1876.2,348.9 1870.8,352.0" fill="#2b2b2b"/><polygon points="1870.8,339.6 1876.2,342.7 1870.8,345.8 1865.4,342.7" fill="#ffffff" stroke="#2b2b2b" stroke-width="0.7" stroke-linejoin="round"/>
<path d="M1861.2 339v-3.6h3.6M1877 335.4h3.6v3.6M1880.6 351.4v3.6h-3.6M1864.8 355h-3.6v-3.6" fill="none" stroke="#222" stroke-width="1.1"/>
<circle cx="1874.8" cy="376" r="6.6" fill="#fff" stroke="#222" stroke-width="0.8"/>
<polygon points="1860.2,378.4 1867.6,374.6 1875,378.4 1867.6,382.2" fill="#fff" stroke="#222" stroke-width="0.7"/><polygon points="1860.2,378.4 1867.6,382.2 1867.6,391.5 1860.2,387.6" fill="#5f5f5f"/><polygon points="1867.6,382.2 1875,378.4 1875,387.6 1867.6,391.5" fill="#2b2b2b"/><polygon points="1860.2,384.6 1867.6,388 1875,384.6 1875,387.6 1867.6,391.5 1860.2,387.6" fill="#8a8a8a" opacity="0.8"/>
<path d="M1860.8 414.6q10-11.5 20 0q-10 11.5-20 0z" fill="#fff" stroke="#222" stroke-width="1.2"/><circle cx="1870.9" cy="414.6" r="4.3" fill="#555"/>
<path d="M1862 444.5l18.5 1.5 1 10.5-17-1.5zM1862.8 448.5l18 1.5M1863.5 452.3l17.6 1.5M1868 445l1.5 10.3M1874 445.5l1.8 10.4" fill="#fff" stroke="#222" stroke-width="1"/>
<path d="M1868 446.5q6.5-8 13.8 0q-6.5 8-13.8 0z" fill="#fff" stroke="#222" stroke-width="0.9"/><circle cx="1875" cy="446.5" r="2.9" fill="#555"/>
<path d="M1861.2 479.6h4.8l1.6-2.8h6.6l1.6 2.8h4.8v13.6h-19.4z" fill="#3a3a3a"/><circle cx="1870.9" cy="486.2" r="4.6" fill="#3a3a3a" stroke="#fff" stroke-width="1.8"/><rect x="1876.3" y="481.2" width="2.2" height="1.8" fill="#fff"/>
<polygon points="1860.5,527.3 1868.5,523.5 1877,527.3 1869,531.3" fill="#fff" stroke="#222" stroke-width="0.7"/><path d="M1864.5 525.4l8.3 3.9M1864.7 529.3l8.3-3.9" stroke="#222" stroke-width="0.6"/><polygon points="1860.5,527.3 1869,531.3 1869,539.5 1860.5,535.6" fill="#5f5f5f"/><polygon points="1869,531.3 1877,527.3 1877,535.6 1869,539.5" fill="#2b2b2b"/>
<g transform="rotate(40 1877 523)"><path d="M1872.5 529v-5a4.5 4.5 0 0 1 9 0v5h-2.6v-5a1.9 1.9 0 0 0 -3.8 0v5z" fill="#fff" stroke="#2b2b2b" stroke-width="0.8"/><rect x="1872.5" y="527" width="2.6" height="2.2" fill="#2b2b2b"/><rect x="1878.9" y="527" width="2.6" height="2.2" fill="#2b2b2b"/></g>
<rect x="1859.2" y="520.7" width="1.6" height="1.6" fill="#222"/>
<rect x="1882.2" y="538.7" width="1.6" height="1.6" fill="#222"/>
<rect x="1859.2" y="538.7" width="1.6" height="1.6" fill="#222"/>
<polygon points="1859.9,561.5 1862.2,562.8 1862.2,565.4 1859.9,564.1" fill="#2b2b2b"/><polygon points="1862.2,562.8 1864.5,561.5 1864.5,564.1 1862.2,565.4" fill="#2b2b2b"/><polygon points="1862.2,560.2 1864.5,561.5 1862.2,562.8 1859.9,561.5" fill="#2b2b2b" stroke="#2b2b2b" stroke-width="0.5" stroke-linejoin="round"/>
<path d="M1861.5 567q0 12 20 13" fill="none" stroke="#222" stroke-width="1.2" stroke-dasharray="1.2 1.2"/>
<g transform="rotate(38 1873 570)"><path d="M1866 578v-9a7 7 0 0 1 14 0v9h-3.6v-9a3.4 3.4 0 0 0 -6.8 0v9z" fill="#fff" stroke="#2b2b2b" stroke-width="0.9"/><rect x="1866" y="575" width="3.6" height="3" fill="#2b2b2b"/><rect x="1876.4" y="575" width="3.6" height="3" fill="#2b2b2b"/></g>
<path d="M1861.8 580.5l21-21" stroke="#222" stroke-width="1.6"/>
<polygon points="1913.2,588 1918.6,583 1918.6,593" fill="#fff"/>
<rect x="1915" y="1048" width="1" height="8" fill="#555"/>
<text x="1822" y="1062.5" font-size="11" fill="#fff">1:07</text>
</svg>
</div></body></html>
